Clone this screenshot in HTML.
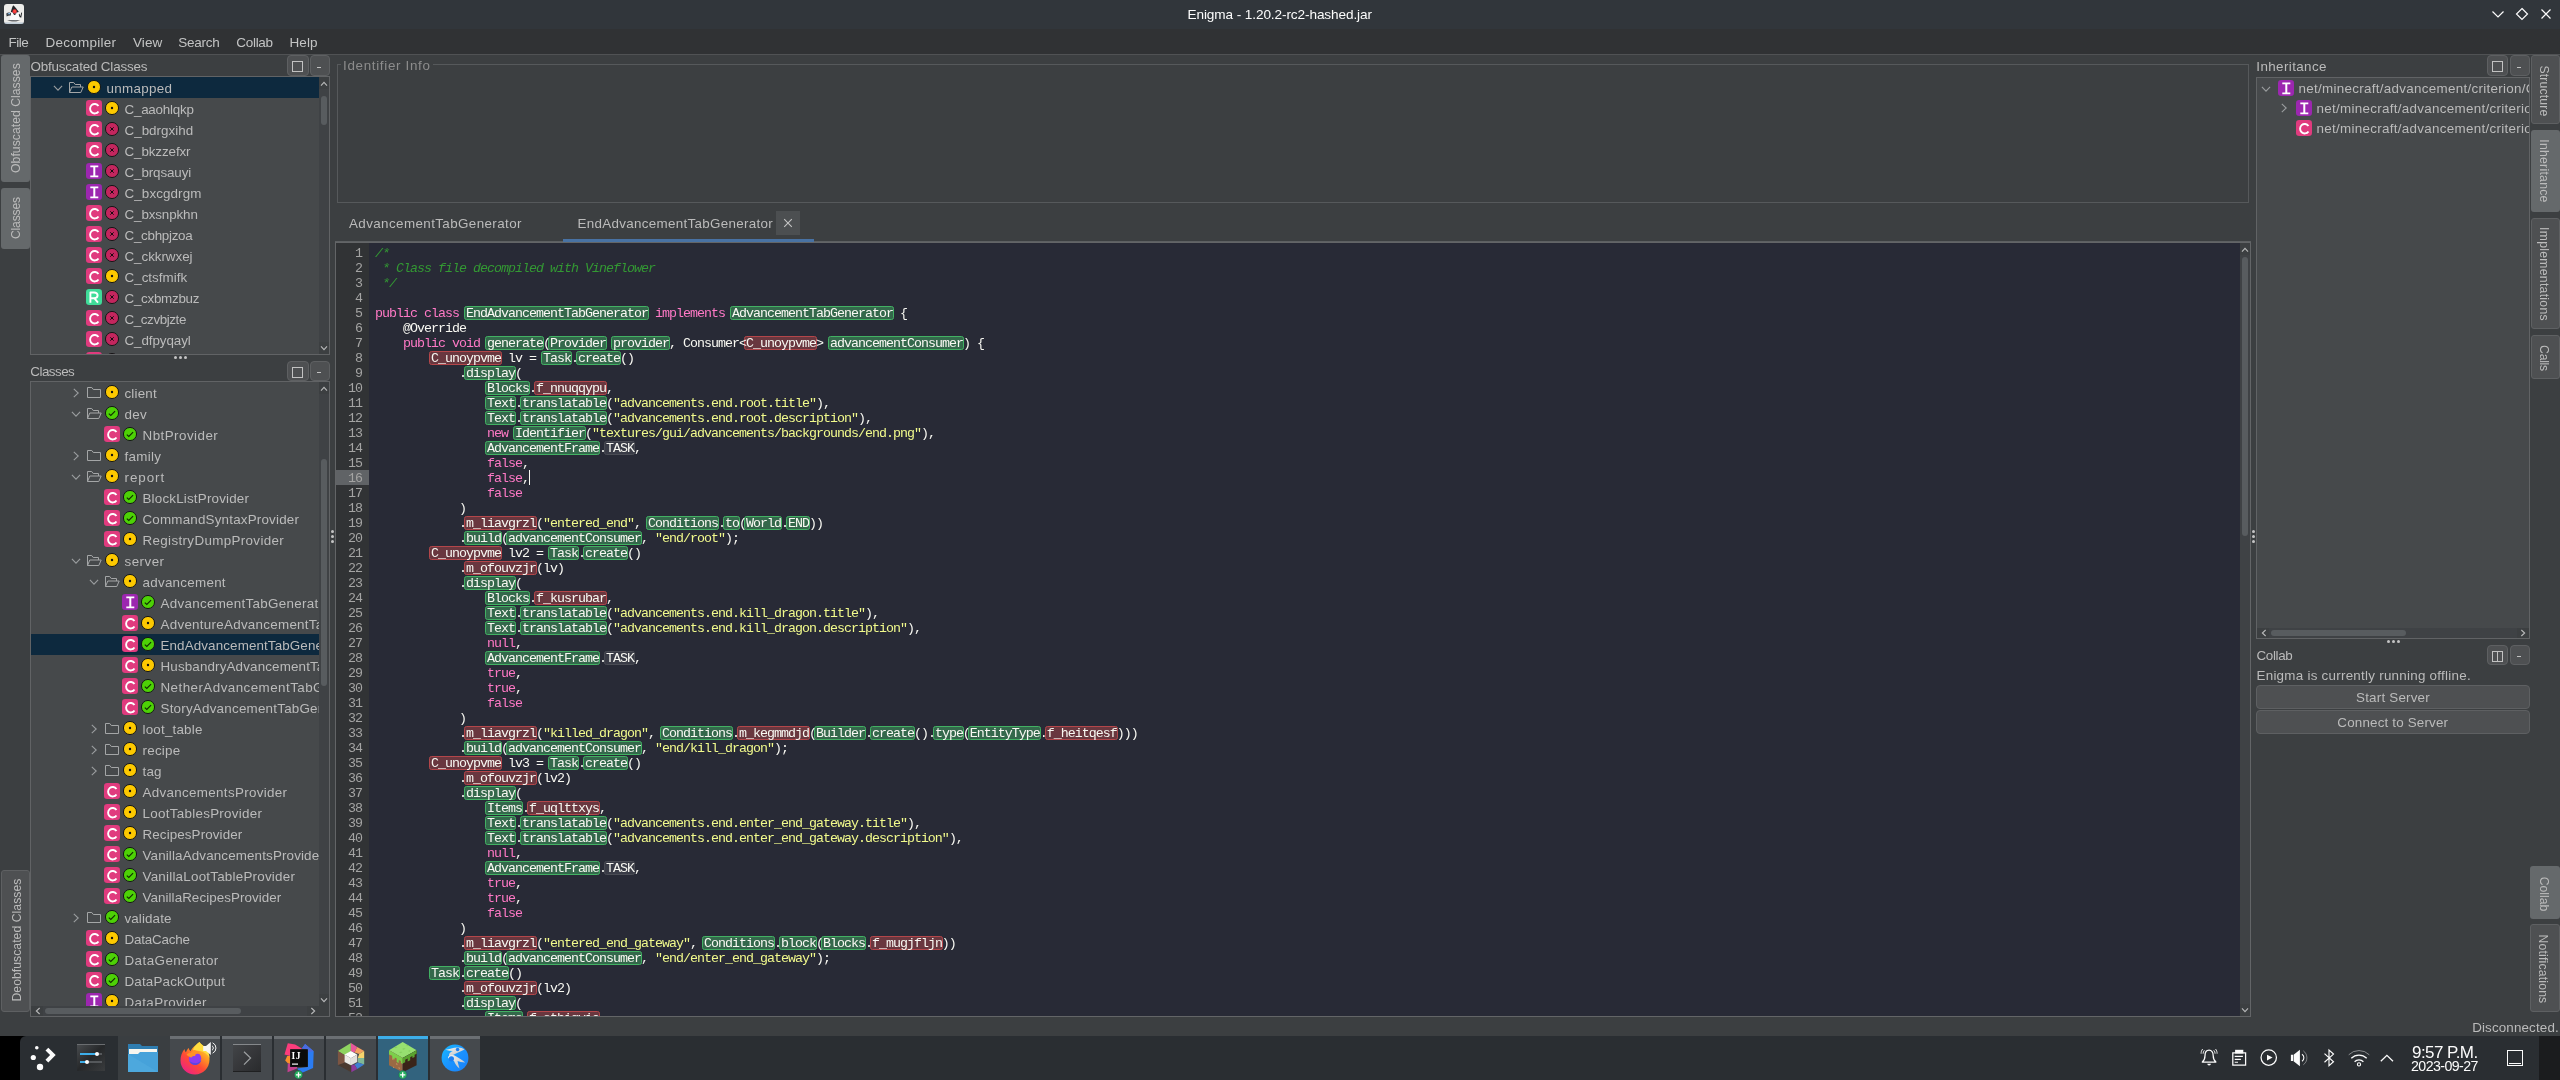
<!DOCTYPE html>
<html><head><meta charset="utf-8"><title>Enigma</title>
<style>
html,body{margin:0;padding:0;background:#3c3f41;}
body{width:2560px;height:1080px;position:relative;overflow:hidden;font-family:"Liberation Sans",sans-serif;}
.a{position:absolute;}
.t{white-space:nowrap;font-family:"Liberation Sans",sans-serif;}
.m{white-space:pre;font-family:"Liberation Mono",monospace;font-size:13.3px;letter-spacing:-0.9812px;line-height:15px;height:15px;color:#f8f8f2;}
.k{color:#ff79c6;} .s{color:#f1fa8c;} .c{color:#339933;font-style:italic;}
.hg,.hr,.hp{box-sizing:border-box;border-radius:2.5px;}
.hg{background:#34684b;border:1px solid #42b163;}
.hr{background:#69373f;border:1px solid #b4464a;}
.hp{background:#393b46;border:1px solid #4a4c54;}
</style></head><body><div id="root" style="position:absolute;left:0;top:0;width:2560px;height:1080px;will-change:transform;">
<div class="a " style="left:0px;top:0px;width:2560px;height:29px;background:#31363b;"></div>
<div class="a t" style="left:1187.5px;top:4.80px;height:20px;line-height:20px;font-size:13.6px;letter-spacing:-0.099px;color:#fcfcfc;">Enigma - 1.20.2-rc2-hashed.jar</div>
<svg class="a" style="left:4px;top:4px" width="20" height="20" viewBox="0 0 20 20">
<rect x="0" y="0" width="20" height="20" rx="3" fill="#ededeb"/>
<rect x="0.500" y="18.500" width="19" height="1.200" rx=".6" fill="#9db3c8" opacity=".7"/>
<path d="M6.800 7.800h8l.700 8.400H6z" fill="#fbfbfb"/>
<path d="M9.200 1.300c.300 0 3.800 3.700 5.600 6.700-2.300 1-5.800 1-8 0 .600-2 1.600-5.400 2.400-6.700z" fill="#23262a"/>
<path d="M9 8.600c1 .9 2.600 1 3.400.500-.200 1.100-1 1.900-1.700 1.900-.800 0-1.500-1-1.700-2.400z" fill="#15171a"/>
<circle cx="10.600" cy="7.400" r="2.150" fill="#f2323c"/><circle cx="10.900" cy="6.900" r="1" fill="#ff5a3a"/>
<path d="M2.300 9.600c1.300-1.300 3.300-1.500 4.700-.600l-.300 2.600c-1.500-.400-2.800 0-4 1z" fill="#2a2d31"/>
<path d="M3.600 9.500c.900-.700 2-.700 2.700-.300l-.400 1.300c-.800-.300-1.600-.200-2.300.200z" fill="#8ec4f2"/>
<path d="M15.500 9.800l.900 2.400.900-3.700.800.200-.900 5-1.600-.600-.900-2.600z" fill="#1f2226"/>
<path d="M3 16.300c3 1.100 10 1.400 13.500.300-3 .200-10 .200-13.500-.300z" fill="#3a3d41"/>
<ellipse cx="9.500" cy="16.600" rx="5.500" ry=".7" fill="#50545a" opacity=".8"/>
</svg>
<svg class="a" style="left:2488px;top:4px" width="70" height="20" viewBox="0 0 70 20" fill="none" stroke="#fcfcfc" stroke-width="1.200">
<path d="M4.500 7.500L10 13L15.500 7.500"/>
<path d="M34 4.500L39.500 10L34 15.500L28.500 10z"/>
<path d="M53.500 5.500L62.500 14.500M62.500 5.500L53.500 14.500"/>
</svg>
<div class="a " style="left:0px;top:29px;width:2560px;height:25px;background:#303234;"></div>
<div class="a " style="left:0px;top:54px;width:2560px;height:1px;background:#505254;"></div>
<div class="a t" style="left:8.6px;top:32.60px;height:20px;line-height:20px;font-size:13.5px;letter-spacing:-0.488px;color:#c3c4c4;">File</div>
<div class="a t" style="left:45.4px;top:32.60px;height:20px;line-height:20px;font-size:13.5px;letter-spacing:0.253px;color:#c3c4c4;">Decompiler</div>
<div class="a t" style="left:133px;top:32.60px;height:20px;line-height:20px;font-size:13.5px;letter-spacing:0.071px;color:#c3c4c4;">View</div>
<div class="a t" style="left:178.2px;top:32.60px;height:20px;line-height:20px;font-size:13.5px;letter-spacing:-0.246px;color:#c3c4c4;">Search</div>
<div class="a t" style="left:236.3px;top:32.60px;height:20px;line-height:20px;font-size:13.5px;letter-spacing:-0.295px;color:#c3c4c4;">Collab</div>
<div class="a t" style="left:289.5px;top:32.60px;height:20px;line-height:20px;font-size:13.5px;letter-spacing:0.109px;color:#c3c4c4;">Help</div>
<div class="a " style="left:0px;top:55px;width:2560px;height:981px;background:#3c3f41;"></div>
<div class="a" style="left:0.5px;top:54.7px;width:29px;height:127.6px;background:#65696b;border-radius:3px;"></div>
<div class="a t" style="left:16.1px;top:118.1px;width:0;height:0;"><div class="t" style="position:absolute;left:-54.90px;top:-10px;width:113.80px;height:20px;line-height:20px;font-size:12.2px;letter-spacing:0.035px;color:#bbbbbb;transform:rotate(-90deg);transform-origin:54.90px 10px;">Obfuscated Classes</div></div>
<div class="a" style="left:0.5px;top:188px;width:29px;height:60.8px;background:#65696b;border-radius:3px;"></div>
<div class="a t" style="left:16.1px;top:217.75px;width:0;height:0;"><div class="t" style="position:absolute;left:-21.05px;top:-10px;width:46.10px;height:20px;line-height:20px;font-size:12.2px;letter-spacing:-0.184px;color:#bbbbbb;transform:rotate(-90deg);transform-origin:21.05px 10px;">Classes</div></div>
<div class="a" style="left:0.5px;top:870px;width:29px;height:141.5px;box-sizing:border-box;background:#4e5052;border:1px solid #5e6062;border-radius:3px;"></div>
<div class="a t" style="left:16.1px;top:940.05px;width:0;height:0;"><div class="t" style="position:absolute;left:-61.55px;top:-10px;width:127.10px;height:20px;line-height:20px;font-size:12.2px;letter-spacing:0.052px;color:#bbbbbb;transform:rotate(-90deg);transform-origin:61.55px 10px;">Deobfuscated Classes</div></div>
<div class="a" style="left:2530.7px;top:55px;width:29.3px;height:69px;box-sizing:border-box;background:#4e5052;border:1px solid #5e6062;border-radius:3px;"></div>
<div class="a t" style="left:2543.7px;top:90.5px;width:0;height:0;"><div class="t" style="position:absolute;left:-25.50px;top:-10px;width:55.00px;height:20px;line-height:20px;font-size:12.2px;letter-spacing:0.167px;color:#bbbbbb;transform:rotate(90deg);transform-origin:25.50px 10px;">Structure</div></div>
<div class="a" style="left:2530.7px;top:130px;width:29.3px;height:82px;background:#65696b;border-radius:3px;"></div>
<div class="a t" style="left:2543.7px;top:171.3px;width:0;height:0;"><div class="t" style="position:absolute;left:-31.70px;top:-10px;width:67.40px;height:20px;line-height:20px;font-size:12.2px;letter-spacing:0.276px;color:#bbbbbb;transform:rotate(90deg);transform-origin:31.70px 10px;">Inheritance</div></div>
<div class="a" style="left:2530.7px;top:218px;width:29.3px;height:111px;box-sizing:border-box;background:#4e5052;border:1px solid #5e6062;border-radius:3px;"></div>
<div class="a t" style="left:2543.7px;top:274.0px;width:0;height:0;"><div class="t" style="position:absolute;left:-47.00px;top:-10px;width:98.00px;height:20px;line-height:20px;font-size:12.2px;letter-spacing:0.299px;color:#bbbbbb;transform:rotate(90deg);transform-origin:47.00px 10px;">Implementations</div></div>
<div class="a" style="left:2530.7px;top:335px;width:29.3px;height:44px;box-sizing:border-box;background:#4e5052;border:1px solid #5e6062;border-radius:3px;"></div>
<div class="a t" style="left:2543.7px;top:357.9px;width:0;height:0;"><div class="t" style="position:absolute;left:-12.90px;top:-10px;width:29.80px;height:20px;line-height:20px;font-size:12.2px;letter-spacing:-0.263px;color:#bbbbbb;transform:rotate(90deg);transform-origin:12.90px 10px;">Calls</div></div>
<div class="a" style="left:2530px;top:866px;width:30px;height:53px;background:#65696b;border-radius:3px;"></div>
<div class="a t" style="left:2543.7px;top:893.85px;width:0;height:0;"><div class="t" style="position:absolute;left:-17.15px;top:-10px;width:38.30px;height:20px;line-height:20px;font-size:12.2px;letter-spacing:-0.048px;color:#bbbbbb;transform:rotate(90deg);transform-origin:17.15px 10px;">Collab</div></div>
<div class="a" style="left:2530px;top:924px;width:30px;height:88px;box-sizing:border-box;background:#4e5052;border:1px solid #5e6062;border-radius:3px;"></div>
<div class="a t" style="left:2543.7px;top:968.8499999999999px;width:0;height:0;"><div class="t" style="position:absolute;left:-34.45px;top:-10px;width:72.90px;height:20px;line-height:20px;font-size:12.2px;letter-spacing:0.188px;color:#bbbbbb;transform:rotate(90deg);transform-origin:34.45px 10px;">Notifications</div></div>
<div class="a t" style="left:30.4px;top:56.80px;height:20px;line-height:20px;font-size:13.4px;letter-spacing:-0.162px;color:#bbbbbb;">Obfuscated Classes</div>
<div class="a" style="left:287px;top:55.25px;width:21.5px;height:20.25px;box-sizing:border-box;background:#4e5052;border:1px solid #5e6062;border-radius:4px;"></div>
<div class="a" style="left:292.25px;top:61.375px;width:11px;height:11px;box-sizing:border-box;border:1px solid #c2c2c2;"></div>
<div class="a" style="left:309.5px;top:55.25px;width:20.5px;height:20.25px;box-sizing:border-box;background:#4e5052;border:1px solid #5e6062;border-radius:4px;"></div>
<div class="a" style="left:317.25px;top:66.875px;width:4px;height:1px;background:#c2c2c2;"></div>
<div class="a" style="left:30px;top:76px;width:300px;height:279px;box-sizing:border-box;background:#46494b;border:1px solid #616365;"></div>
<div class="a clip" style="left:31px;top:77px;width:288px;height:277px;overflow:hidden;"><div class="a" style="left:-31px;top:-77px;">
<div class="a " style="left:31px;top:77px;width:288px;height:21px;background:#0d293e;"></div>
<svg class="a" style="left:49.5px;top:80.0px" width="16" height="16" viewBox="-8 -8 16 16"><path d="M-4.10 -2.20L0 2.20L4.10 -2.20" fill="none" stroke="#9a9d9f" stroke-width="1.1"/></svg>
<svg class="a" style="left:68px;top:79px" width="16" height="16" viewBox="0 0 16 16"><path d="M1.500 13.500V3.500h4.200l1.500 2h5.300v2.500" fill="none" stroke="#a4a6a7" stroke-width="1"/><path d="M1.500 13.500l2.300-5.500h11.400l-2.400 5.500z" fill="none" stroke="#a4a6a7" stroke-width="1" stroke-linejoin="round"/></svg>
<svg class="a" style="left:86px;top:79px" width="16" height="16" viewBox="0 0 16 16"><circle cx="8" cy="8" r="6.550" fill="#fdc900" stroke="#141617" stroke-width="1"/><circle cx="8" cy="8" r="1.2" fill="#111"/></svg>
<div class="a t" style="left:106.5px;top:77.60px;height:21px;line-height:21px;font-size:13.4px;letter-spacing:0.321px;color:#bbbbbb;">unmapped</div>
<svg class="a" style="left:86px;top:100px" width="16" height="16" viewBox="0 0 16 16"><rect x="0" y="0" width="16" height="16" rx="3.200" fill="#e03b7e"/><path d="M12.47 5.98A4.6 4.75 0 1 0 12.47 11.42" fill="none" stroke="#fff" stroke-width="1.900"/></svg>
<svg class="a" style="left:104px;top:100px" width="16" height="16" viewBox="0 0 16 16"><circle cx="8" cy="8" r="6.550" fill="#fdc900" stroke="#141617" stroke-width="1"/><circle cx="8" cy="8" r="1.2" fill="#111"/></svg>
<div class="a t" style="left:124.5px;top:98.60px;height:21px;line-height:21px;font-size:13.4px;letter-spacing:-0.232px;color:#bbbbbb;">C_aaohlqkp</div>
<svg class="a" style="left:86px;top:121px" width="16" height="16" viewBox="0 0 16 16"><rect x="0" y="0" width="16" height="16" rx="3.200" fill="#e03b7e"/><path d="M12.47 5.98A4.6 4.75 0 1 0 12.47 11.42" fill="none" stroke="#fff" stroke-width="1.900"/></svg>
<svg class="a" style="left:104px;top:121px" width="16" height="16" viewBox="0 0 16 16"><circle cx="8" cy="8" r="6.550" fill="#c3265e" stroke="#141617" stroke-width="1"/><path d="M6.300 6.300l3.400 3.400M9.700 6.300l-3.400 3.400" stroke="#1a0a10" stroke-width="1" fill="none"/></svg>
<div class="a t" style="left:124.5px;top:119.60px;height:21px;line-height:21px;font-size:13.4px;letter-spacing:0.017px;color:#bbbbbb;">C_bdrgxihd</div>
<svg class="a" style="left:86px;top:142px" width="16" height="16" viewBox="0 0 16 16"><rect x="0" y="0" width="16" height="16" rx="3.200" fill="#e03b7e"/><path d="M12.47 5.98A4.6 4.75 0 1 0 12.47 11.42" fill="none" stroke="#fff" stroke-width="1.900"/></svg>
<svg class="a" style="left:104px;top:142px" width="16" height="16" viewBox="0 0 16 16"><circle cx="8" cy="8" r="6.550" fill="#c3265e" stroke="#141617" stroke-width="1"/><path d="M6.300 6.300l3.400 3.400M9.700 6.300l-3.400 3.400" stroke="#1a0a10" stroke-width="1" fill="none"/></svg>
<div class="a t" style="left:124.5px;top:140.60px;height:21px;line-height:21px;font-size:13.4px;letter-spacing:-0.102px;color:#bbbbbb;">C_bkzzefxr</div>
<svg class="a" style="left:86px;top:163px" width="16" height="16" viewBox="0 0 16 16"><rect x="0" y="0" width="16" height="16" rx="3.200" fill="#9c27b0"/><path d="M4.300 2.600h8v1.600H9.300v8.400h3v1.600h-8v-1.600h3V4.200h-3z" fill="#fff"/></svg>
<svg class="a" style="left:104px;top:163px" width="16" height="16" viewBox="0 0 16 16"><circle cx="8" cy="8" r="6.550" fill="#c3265e" stroke="#141617" stroke-width="1"/><path d="M6.300 6.300l3.400 3.400M9.700 6.300l-3.400 3.400" stroke="#1a0a10" stroke-width="1" fill="none"/></svg>
<div class="a t" style="left:124.5px;top:161.60px;height:21px;line-height:21px;font-size:13.4px;letter-spacing:-0.108px;color:#bbbbbb;">C_brqsauyi</div>
<svg class="a" style="left:86px;top:184px" width="16" height="16" viewBox="0 0 16 16"><rect x="0" y="0" width="16" height="16" rx="3.200" fill="#9c27b0"/><path d="M4.300 2.600h8v1.600H9.300v8.400h3v1.600h-8v-1.600h3V4.200h-3z" fill="#fff"/></svg>
<svg class="a" style="left:104px;top:184px" width="16" height="16" viewBox="0 0 16 16"><circle cx="8" cy="8" r="6.550" fill="#c3265e" stroke="#141617" stroke-width="1"/><path d="M6.300 6.300l3.400 3.400M9.700 6.300l-3.400 3.400" stroke="#1a0a10" stroke-width="1" fill="none"/></svg>
<div class="a t" style="left:124.5px;top:182.60px;height:21px;line-height:21px;font-size:13.4px;letter-spacing:0.104px;color:#bbbbbb;">C_bxcgdrgm</div>
<svg class="a" style="left:86px;top:205px" width="16" height="16" viewBox="0 0 16 16"><rect x="0" y="0" width="16" height="16" rx="3.200" fill="#e03b7e"/><path d="M12.47 5.98A4.6 4.75 0 1 0 12.47 11.42" fill="none" stroke="#fff" stroke-width="1.900"/></svg>
<svg class="a" style="left:104px;top:205px" width="16" height="16" viewBox="0 0 16 16"><circle cx="8" cy="8" r="6.550" fill="#c3265e" stroke="#141617" stroke-width="1"/><path d="M6.300 6.300l3.400 3.400M9.700 6.300l-3.400 3.400" stroke="#1a0a10" stroke-width="1" fill="none"/></svg>
<div class="a t" style="left:124.5px;top:203.60px;height:21px;line-height:21px;font-size:13.4px;letter-spacing:-0.119px;color:#bbbbbb;">C_bxsnpkhn</div>
<svg class="a" style="left:86px;top:226px" width="16" height="16" viewBox="0 0 16 16"><rect x="0" y="0" width="16" height="16" rx="3.200" fill="#e03b7e"/><path d="M12.47 5.98A4.6 4.75 0 1 0 12.47 11.42" fill="none" stroke="#fff" stroke-width="1.900"/></svg>
<svg class="a" style="left:104px;top:226px" width="16" height="16" viewBox="0 0 16 16"><circle cx="8" cy="8" r="6.550" fill="#c3265e" stroke="#141617" stroke-width="1"/><path d="M6.300 6.300l3.400 3.400M9.700 6.300l-3.400 3.400" stroke="#1a0a10" stroke-width="1" fill="none"/></svg>
<div class="a t" style="left:124.5px;top:224.60px;height:21px;line-height:21px;font-size:13.4px;letter-spacing:-0.277px;color:#bbbbbb;">C_cbhpjzoa</div>
<svg class="a" style="left:86px;top:247px" width="16" height="16" viewBox="0 0 16 16"><rect x="0" y="0" width="16" height="16" rx="3.200" fill="#e03b7e"/><path d="M12.47 5.98A4.6 4.75 0 1 0 12.47 11.42" fill="none" stroke="#fff" stroke-width="1.900"/></svg>
<svg class="a" style="left:104px;top:247px" width="16" height="16" viewBox="0 0 16 16"><circle cx="8" cy="8" r="6.550" fill="#c3265e" stroke="#141617" stroke-width="1"/><path d="M6.300 6.300l3.400 3.400M9.700 6.300l-3.400 3.400" stroke="#1a0a10" stroke-width="1" fill="none"/></svg>
<div class="a t" style="left:124.5px;top:245.60px;height:21px;line-height:21px;font-size:13.4px;letter-spacing:-0.050px;color:#bbbbbb;">C_ckkrwxej</div>
<svg class="a" style="left:86px;top:268px" width="16" height="16" viewBox="0 0 16 16"><rect x="0" y="0" width="16" height="16" rx="3.200" fill="#e03b7e"/><path d="M12.47 5.98A4.6 4.75 0 1 0 12.47 11.42" fill="none" stroke="#fff" stroke-width="1.900"/></svg>
<svg class="a" style="left:104px;top:268px" width="16" height="16" viewBox="0 0 16 16"><circle cx="8" cy="8" r="6.550" fill="#fdc900" stroke="#141617" stroke-width="1"/><circle cx="8" cy="8" r="1.2" fill="#111"/></svg>
<div class="a t" style="left:124.5px;top:266.60px;height:21px;line-height:21px;font-size:13.4px;letter-spacing:0.016px;color:#bbbbbb;">C_ctsfmifk</div>
<svg class="a" style="left:86px;top:289px" width="16" height="16" viewBox="0 0 16 16"><rect x="0" y="0" width="16" height="16" rx="3.200" fill="#3fdc99"/><path d="M4.400 13.700V3.500h3.700c2.200 0 3.500 1 3.500 2.800s-1.300 2.900-3.500 2.900H4.400M8.300 9.200l3.700 4.500" fill="none" stroke="#fff" stroke-width="1.900" stroke-linejoin="round"/></svg>
<svg class="a" style="left:104px;top:289px" width="16" height="16" viewBox="0 0 16 16"><circle cx="8" cy="8" r="6.550" fill="#c3265e" stroke="#141617" stroke-width="1"/><path d="M6.300 6.300l3.400 3.400M9.700 6.300l-3.400 3.400" stroke="#1a0a10" stroke-width="1" fill="none"/></svg>
<div class="a t" style="left:124.5px;top:287.60px;height:21px;line-height:21px;font-size:13.4px;letter-spacing:-0.275px;color:#bbbbbb;">C_cxbmzbuz</div>
<svg class="a" style="left:86px;top:310px" width="16" height="16" viewBox="0 0 16 16"><rect x="0" y="0" width="16" height="16" rx="3.200" fill="#e03b7e"/><path d="M12.47 5.98A4.6 4.75 0 1 0 12.47 11.42" fill="none" stroke="#fff" stroke-width="1.900"/></svg>
<svg class="a" style="left:104px;top:310px" width="16" height="16" viewBox="0 0 16 16"><circle cx="8" cy="8" r="6.550" fill="#c3265e" stroke="#141617" stroke-width="1"/><path d="M6.300 6.300l3.400 3.400M9.700 6.300l-3.400 3.400" stroke="#1a0a10" stroke-width="1" fill="none"/></svg>
<div class="a t" style="left:124.5px;top:308.60px;height:21px;line-height:21px;font-size:13.4px;letter-spacing:-0.403px;color:#bbbbbb;">C_czvbjzte</div>
<svg class="a" style="left:86px;top:331px" width="16" height="16" viewBox="0 0 16 16"><rect x="0" y="0" width="16" height="16" rx="3.200" fill="#e03b7e"/><path d="M12.47 5.98A4.6 4.75 0 1 0 12.47 11.42" fill="none" stroke="#fff" stroke-width="1.900"/></svg>
<svg class="a" style="left:104px;top:331px" width="16" height="16" viewBox="0 0 16 16"><circle cx="8" cy="8" r="6.550" fill="#c3265e" stroke="#141617" stroke-width="1"/><path d="M6.300 6.300l3.400 3.400M9.700 6.300l-3.400 3.400" stroke="#1a0a10" stroke-width="1" fill="none"/></svg>
<div class="a t" style="left:124.5px;top:329.60px;height:21px;line-height:21px;font-size:13.4px;letter-spacing:-0.074px;color:#bbbbbb;">C_dfpyqayl</div>
<svg class="a" style="left:86px;top:352px" width="16" height="16" viewBox="0 0 16 16"><rect x="0" y="0" width="16" height="16" rx="3.200" fill="#e03b7e"/><path d="M12.47 5.98A4.6 4.75 0 1 0 12.47 11.42" fill="none" stroke="#fff" stroke-width="1.900"/></svg>
<svg class="a" style="left:104px;top:352px" width="16" height="16" viewBox="0 0 16 16"><circle cx="8" cy="8" r="6.550" fill="#c3265e" stroke="#141617" stroke-width="1"/><path d="M6.300 6.300l3.400 3.400M9.700 6.300l-3.400 3.400" stroke="#1a0a10" stroke-width="1" fill="none"/></svg>
<div class="a t" style="left:124.5px;top:350.60px;height:21px;line-height:21px;font-size:13.4px;letter-spacing:-0.449px;color:#bbbbbb;">C_dgvbkzpq</div>
</div></div>
<div class="a " style="left:319px;top:77px;width:10px;height:277px;background:#3f4245;"></div>
<div class="a " style="left:319px;top:77px;width:10px;height:12px;background:#3c3f41;"></div>
<div class="a " style="left:319px;top:342px;width:10px;height:12px;background:#3c3f41;"></div>
<svg class="a" style="left:316px;top:75.5px" width="16" height="16" viewBox="-8 -8 16 16"><path d="M-3.00 1.65L0 -1.65L3.00 1.65" fill="none" stroke="#b8b9ba" stroke-width="1.1"/></svg>
<svg class="a" style="left:316px;top:339.5px" width="16" height="16" viewBox="-8 -8 16 16"><path d="M-3.00 -1.65L0 1.65L3.00 -1.65" fill="none" stroke="#b8b9ba" stroke-width="1.1"/></svg>
<div class="a" style="left:321px;top:96px;width:6px;height:29px;background:#585c5f;border-radius:3px;"></div>
<div class="a" style="left:173.5px;top:356px;width:3px;height:3px;border-radius:50%;background:#c4c4c4;"></div>
<div class="a" style="left:178.5px;top:356px;width:3px;height:3px;border-radius:50%;background:#c4c4c4;"></div>
<div class="a" style="left:183.5px;top:356px;width:3px;height:3px;border-radius:50%;background:#c4c4c4;"></div>
<div class="a t" style="left:30.3px;top:362.40px;height:20px;line-height:20px;font-size:13.4px;letter-spacing:-0.523px;color:#bbbbbb;">Classes</div>
<div class="a" style="left:287px;top:360.5px;width:21.5px;height:20.25px;box-sizing:border-box;background:#4e5052;border:1px solid #5e6062;border-radius:4px;"></div>
<div class="a" style="left:292.25px;top:366.625px;width:11px;height:11px;box-sizing:border-box;border:1px solid #c2c2c2;"></div>
<div class="a" style="left:309.5px;top:360.5px;width:20.5px;height:20.25px;box-sizing:border-box;background:#4e5052;border:1px solid #5e6062;border-radius:4px;"></div>
<div class="a" style="left:317.25px;top:372.125px;width:4px;height:1px;background:#c2c2c2;"></div>
<div class="a" style="left:30px;top:381px;width:300px;height:636px;box-sizing:border-box;background:#46494b;border:1px solid #616365;"></div>
<div class="a clip" style="left:31px;top:382px;width:288px;height:624px;overflow:hidden;"><div class="a" style="left:-31px;top:-382px;">
<svg class="a" style="left:67.5px;top:384.5px" width="16" height="16" viewBox="-8 -8 16 16"><path d="M-2.20 -4.10L2.20 0L-2.20 4.10" fill="none" stroke="#9a9d9f" stroke-width="1.1"/></svg>
<svg class="a" style="left:86px;top:384px" width="16" height="16" viewBox="0 0 16 16"><path d="M1.500 13.500V3.500h4.300l1.500 2h7.200v8z" fill="none" stroke="#a4a6a7" stroke-width="1" stroke-linejoin="round"/></svg>
<svg class="a" style="left:104px;top:384px" width="16" height="16" viewBox="0 0 16 16"><circle cx="8" cy="8" r="6.550" fill="#fdc900" stroke="#141617" stroke-width="1"/><circle cx="8" cy="8" r="1.2" fill="#111"/></svg>
<div class="a t" style="left:124.5px;top:382.60px;height:21px;line-height:21px;font-size:13.4px;letter-spacing:0.170px;color:#bbbbbb;">client</div>
<svg class="a" style="left:67.5px;top:406.0px" width="16" height="16" viewBox="-8 -8 16 16"><path d="M-4.10 -2.20L0 2.20L4.10 -2.20" fill="none" stroke="#9a9d9f" stroke-width="1.1"/></svg>
<svg class="a" style="left:86px;top:405px" width="16" height="16" viewBox="0 0 16 16"><path d="M1.500 13.500V3.500h4.200l1.500 2h5.300v2.500" fill="none" stroke="#a4a6a7" stroke-width="1"/><path d="M1.500 13.500l2.300-5.500h11.400l-2.400 5.500z" fill="none" stroke="#a4a6a7" stroke-width="1" stroke-linejoin="round"/></svg>
<svg class="a" style="left:104px;top:405px" width="16" height="16" viewBox="0 0 16 16"><circle cx="8" cy="8" r="6.550" fill="#4dd106" stroke="#141617" stroke-width="1"/><path d="M4.800 8.600l2 1.900 4.300-4.400" stroke="#102a00" stroke-width="1.100" fill="none"/></svg>
<div class="a t" style="left:124.5px;top:403.60px;height:21px;line-height:21px;font-size:13.4px;letter-spacing:0.365px;color:#bbbbbb;">dev</div>
<svg class="a" style="left:104px;top:426px" width="16" height="16" viewBox="0 0 16 16"><rect x="0" y="0" width="16" height="16" rx="3.200" fill="#e03b7e"/><path d="M12.47 5.98A4.6 4.75 0 1 0 12.47 11.42" fill="none" stroke="#fff" stroke-width="1.900"/></svg>
<svg class="a" style="left:122px;top:426px" width="16" height="16" viewBox="0 0 16 16"><circle cx="8" cy="8" r="6.550" fill="#4dd106" stroke="#141617" stroke-width="1"/><path d="M4.800 8.600l2 1.900 4.300-4.400" stroke="#102a00" stroke-width="1.100" fill="none"/></svg>
<div class="a t" style="left:142.5px;top:424.60px;height:21px;line-height:21px;font-size:13.4px;letter-spacing:0.459px;color:#bbbbbb;">NbtProvider</div>
<svg class="a" style="left:67.5px;top:447.5px" width="16" height="16" viewBox="-8 -8 16 16"><path d="M-2.20 -4.10L2.20 0L-2.20 4.10" fill="none" stroke="#9a9d9f" stroke-width="1.1"/></svg>
<svg class="a" style="left:86px;top:447px" width="16" height="16" viewBox="0 0 16 16"><path d="M1.500 13.500V3.500h4.300l1.500 2h7.200v8z" fill="none" stroke="#a4a6a7" stroke-width="1" stroke-linejoin="round"/></svg>
<svg class="a" style="left:104px;top:447px" width="16" height="16" viewBox="0 0 16 16"><circle cx="8" cy="8" r="6.550" fill="#fdc900" stroke="#141617" stroke-width="1"/><circle cx="8" cy="8" r="1.2" fill="#111"/></svg>
<div class="a t" style="left:124.5px;top:445.60px;height:21px;line-height:21px;font-size:13.4px;letter-spacing:0.285px;color:#bbbbbb;">family</div>
<svg class="a" style="left:67.5px;top:469.0px" width="16" height="16" viewBox="-8 -8 16 16"><path d="M-4.10 -2.20L0 2.20L4.10 -2.20" fill="none" stroke="#9a9d9f" stroke-width="1.1"/></svg>
<svg class="a" style="left:86px;top:468px" width="16" height="16" viewBox="0 0 16 16"><path d="M1.500 13.500V3.500h4.200l1.500 2h5.300v2.500" fill="none" stroke="#a4a6a7" stroke-width="1"/><path d="M1.500 13.500l2.300-5.500h11.400l-2.400 5.500z" fill="none" stroke="#a4a6a7" stroke-width="1" stroke-linejoin="round"/></svg>
<svg class="a" style="left:104px;top:468px" width="16" height="16" viewBox="0 0 16 16"><circle cx="8" cy="8" r="6.550" fill="#fdc900" stroke="#141617" stroke-width="1"/><circle cx="8" cy="8" r="1.2" fill="#111"/></svg>
<div class="a t" style="left:124.5px;top:466.60px;height:21px;line-height:21px;font-size:13.4px;letter-spacing:0.949px;color:#bbbbbb;">report</div>
<svg class="a" style="left:104px;top:489px" width="16" height="16" viewBox="0 0 16 16"><rect x="0" y="0" width="16" height="16" rx="3.200" fill="#e03b7e"/><path d="M12.47 5.98A4.6 4.75 0 1 0 12.47 11.42" fill="none" stroke="#fff" stroke-width="1.900"/></svg>
<svg class="a" style="left:122px;top:489px" width="16" height="16" viewBox="0 0 16 16"><circle cx="8" cy="8" r="6.550" fill="#4dd106" stroke="#141617" stroke-width="1"/><path d="M4.800 8.600l2 1.900 4.300-4.400" stroke="#102a00" stroke-width="1.100" fill="none"/></svg>
<div class="a t" style="left:142.5px;top:487.60px;height:21px;line-height:21px;font-size:13.4px;letter-spacing:0.187px;color:#bbbbbb;">BlockListProvider</div>
<svg class="a" style="left:104px;top:510px" width="16" height="16" viewBox="0 0 16 16"><rect x="0" y="0" width="16" height="16" rx="3.200" fill="#e03b7e"/><path d="M12.47 5.98A4.6 4.75 0 1 0 12.47 11.42" fill="none" stroke="#fff" stroke-width="1.900"/></svg>
<svg class="a" style="left:122px;top:510px" width="16" height="16" viewBox="0 0 16 16"><circle cx="8" cy="8" r="6.550" fill="#4dd106" stroke="#141617" stroke-width="1"/><path d="M4.800 8.600l2 1.900 4.300-4.400" stroke="#102a00" stroke-width="1.100" fill="none"/></svg>
<div class="a t" style="left:142.5px;top:508.60px;height:21px;line-height:21px;font-size:13.4px;letter-spacing:0.192px;color:#bbbbbb;">CommandSyntaxProvider</div>
<svg class="a" style="left:104px;top:531px" width="16" height="16" viewBox="0 0 16 16"><rect x="0" y="0" width="16" height="16" rx="3.200" fill="#e03b7e"/><path d="M12.47 5.98A4.6 4.75 0 1 0 12.47 11.42" fill="none" stroke="#fff" stroke-width="1.900"/></svg>
<svg class="a" style="left:122px;top:531px" width="16" height="16" viewBox="0 0 16 16"><circle cx="8" cy="8" r="6.550" fill="#fdc900" stroke="#141617" stroke-width="1"/><circle cx="8" cy="8" r="1.2" fill="#111"/></svg>
<div class="a t" style="left:142.5px;top:529.60px;height:21px;line-height:21px;font-size:13.4px;letter-spacing:0.346px;color:#bbbbbb;">RegistryDumpProvider</div>
<svg class="a" style="left:67.5px;top:553.0px" width="16" height="16" viewBox="-8 -8 16 16"><path d="M-4.10 -2.20L0 2.20L4.10 -2.20" fill="none" stroke="#9a9d9f" stroke-width="1.1"/></svg>
<svg class="a" style="left:86px;top:552px" width="16" height="16" viewBox="0 0 16 16"><path d="M1.500 13.500V3.500h4.200l1.500 2h5.300v2.500" fill="none" stroke="#a4a6a7" stroke-width="1"/><path d="M1.500 13.500l2.300-5.500h11.400l-2.400 5.500z" fill="none" stroke="#a4a6a7" stroke-width="1" stroke-linejoin="round"/></svg>
<svg class="a" style="left:104px;top:552px" width="16" height="16" viewBox="0 0 16 16"><circle cx="8" cy="8" r="6.550" fill="#fdc900" stroke="#141617" stroke-width="1"/><circle cx="8" cy="8" r="1.2" fill="#111"/></svg>
<div class="a t" style="left:124.5px;top:550.60px;height:21px;line-height:21px;font-size:13.4px;letter-spacing:0.462px;color:#bbbbbb;">server</div>
<svg class="a" style="left:85.5px;top:574.0px" width="16" height="16" viewBox="-8 -8 16 16"><path d="M-4.10 -2.20L0 2.20L4.10 -2.20" fill="none" stroke="#9a9d9f" stroke-width="1.1"/></svg>
<svg class="a" style="left:104px;top:573px" width="16" height="16" viewBox="0 0 16 16"><path d="M1.500 13.500V3.500h4.200l1.500 2h5.300v2.500" fill="none" stroke="#a4a6a7" stroke-width="1"/><path d="M1.500 13.500l2.300-5.500h11.400l-2.400 5.500z" fill="none" stroke="#a4a6a7" stroke-width="1" stroke-linejoin="round"/></svg>
<svg class="a" style="left:122px;top:573px" width="16" height="16" viewBox="0 0 16 16"><circle cx="8" cy="8" r="6.550" fill="#fdc900" stroke="#141617" stroke-width="1"/><circle cx="8" cy="8" r="1.2" fill="#111"/></svg>
<div class="a t" style="left:142.5px;top:571.60px;height:21px;line-height:21px;font-size:13.4px;letter-spacing:0.268px;color:#bbbbbb;">advancement</div>
<svg class="a" style="left:122px;top:594px" width="16" height="16" viewBox="0 0 16 16"><rect x="0" y="0" width="16" height="16" rx="3.200" fill="#9c27b0"/><path d="M4.300 2.600h8v1.600H9.300v8.400h3v1.600h-8v-1.600h3V4.200h-3z" fill="#fff"/></svg>
<svg class="a" style="left:140px;top:594px" width="16" height="16" viewBox="0 0 16 16"><circle cx="8" cy="8" r="6.550" fill="#4dd106" stroke="#141617" stroke-width="1"/><path d="M4.800 8.600l2 1.900 4.300-4.400" stroke="#102a00" stroke-width="1.100" fill="none"/></svg>
<div class="a t" style="left:160.5px;top:592.60px;height:21px;line-height:21px;font-size:13.4px;letter-spacing:0.292px;color:#bbbbbb;">AdvancementTabGenerator</div>
<svg class="a" style="left:122px;top:615px" width="16" height="16" viewBox="0 0 16 16"><rect x="0" y="0" width="16" height="16" rx="3.200" fill="#e03b7e"/><path d="M12.47 5.98A4.6 4.75 0 1 0 12.47 11.42" fill="none" stroke="#fff" stroke-width="1.900"/></svg>
<svg class="a" style="left:140px;top:615px" width="16" height="16" viewBox="0 0 16 16"><circle cx="8" cy="8" r="6.550" fill="#fdc900" stroke="#141617" stroke-width="1"/><circle cx="8" cy="8" r="1.2" fill="#111"/></svg>
<div class="a t" style="left:160.5px;top:613.60px;height:21px;line-height:21px;font-size:13.4px;letter-spacing:0.269px;color:#bbbbbb;">AdventureAdvancementTabGenerator</div>
<div class="a " style="left:31px;top:634px;width:288px;height:21px;background:#0d293e;"></div>
<svg class="a" style="left:122px;top:636px" width="16" height="16" viewBox="0 0 16 16"><rect x="0" y="0" width="16" height="16" rx="3.200" fill="#e03b7e"/><path d="M12.47 5.98A4.6 4.75 0 1 0 12.47 11.42" fill="none" stroke="#fff" stroke-width="1.900"/></svg>
<svg class="a" style="left:140px;top:636px" width="16" height="16" viewBox="0 0 16 16"><circle cx="8" cy="8" r="6.550" fill="#4dd106" stroke="#141617" stroke-width="1"/><path d="M4.800 8.600l2 1.900 4.300-4.400" stroke="#102a00" stroke-width="1.100" fill="none"/></svg>
<div class="a t" style="left:160.5px;top:634.60px;height:21px;line-height:21px;font-size:13.4px;letter-spacing:0.119px;color:#bbbbbb;">EndAdvancementTabGenerator</div>
<svg class="a" style="left:122px;top:657px" width="16" height="16" viewBox="0 0 16 16"><rect x="0" y="0" width="16" height="16" rx="3.200" fill="#e03b7e"/><path d="M12.47 5.98A4.6 4.75 0 1 0 12.47 11.42" fill="none" stroke="#fff" stroke-width="1.900"/></svg>
<svg class="a" style="left:140px;top:657px" width="16" height="16" viewBox="0 0 16 16"><circle cx="8" cy="8" r="6.550" fill="#fdc900" stroke="#141617" stroke-width="1"/><circle cx="8" cy="8" r="1.2" fill="#111"/></svg>
<div class="a t" style="left:160.5px;top:655.60px;height:21px;line-height:21px;font-size:13.4px;letter-spacing:0.143px;color:#bbbbbb;">HusbandryAdvancementTabGenerator</div>
<svg class="a" style="left:122px;top:678px" width="16" height="16" viewBox="0 0 16 16"><rect x="0" y="0" width="16" height="16" rx="3.200" fill="#e03b7e"/><path d="M12.47 5.98A4.6 4.75 0 1 0 12.47 11.42" fill="none" stroke="#fff" stroke-width="1.900"/></svg>
<svg class="a" style="left:140px;top:678px" width="16" height="16" viewBox="0 0 16 16"><circle cx="8" cy="8" r="6.550" fill="#4dd106" stroke="#141617" stroke-width="1"/><path d="M4.800 8.600l2 1.900 4.300-4.400" stroke="#102a00" stroke-width="1.100" fill="none"/></svg>
<div class="a t" style="left:160.5px;top:676.60px;height:21px;line-height:21px;font-size:13.4px;letter-spacing:0.447px;color:#bbbbbb;">NetherAdvancementTabGenerator</div>
<svg class="a" style="left:122px;top:699px" width="16" height="16" viewBox="0 0 16 16"><rect x="0" y="0" width="16" height="16" rx="3.200" fill="#e03b7e"/><path d="M12.47 5.98A4.6 4.75 0 1 0 12.47 11.42" fill="none" stroke="#fff" stroke-width="1.900"/></svg>
<svg class="a" style="left:140px;top:699px" width="16" height="16" viewBox="0 0 16 16"><circle cx="8" cy="8" r="6.550" fill="#4dd106" stroke="#141617" stroke-width="1"/><path d="M4.800 8.600l2 1.900 4.300-4.400" stroke="#102a00" stroke-width="1.100" fill="none"/></svg>
<div class="a t" style="left:160.5px;top:697.60px;height:21px;line-height:21px;font-size:13.4px;letter-spacing:0.224px;color:#bbbbbb;">StoryAdvancementTabGenerator</div>
<svg class="a" style="left:85.5px;top:720.5px" width="16" height="16" viewBox="-8 -8 16 16"><path d="M-2.20 -4.10L2.20 0L-2.20 4.10" fill="none" stroke="#9a9d9f" stroke-width="1.1"/></svg>
<svg class="a" style="left:104px;top:720px" width="16" height="16" viewBox="0 0 16 16"><path d="M1.500 13.500V3.500h4.300l1.500 2h7.200v8z" fill="none" stroke="#a4a6a7" stroke-width="1" stroke-linejoin="round"/></svg>
<svg class="a" style="left:122px;top:720px" width="16" height="16" viewBox="0 0 16 16"><circle cx="8" cy="8" r="6.550" fill="#fdc900" stroke="#141617" stroke-width="1"/><circle cx="8" cy="8" r="1.2" fill="#111"/></svg>
<div class="a t" style="left:142.5px;top:718.60px;height:21px;line-height:21px;font-size:13.4px;letter-spacing:0.199px;color:#bbbbbb;">loot_table</div>
<svg class="a" style="left:85.5px;top:741.5px" width="16" height="16" viewBox="-8 -8 16 16"><path d="M-2.20 -4.10L2.20 0L-2.20 4.10" fill="none" stroke="#9a9d9f" stroke-width="1.1"/></svg>
<svg class="a" style="left:104px;top:741px" width="16" height="16" viewBox="0 0 16 16"><path d="M1.500 13.500V3.500h4.300l1.500 2h7.200v8z" fill="none" stroke="#a4a6a7" stroke-width="1" stroke-linejoin="round"/></svg>
<svg class="a" style="left:122px;top:741px" width="16" height="16" viewBox="0 0 16 16"><circle cx="8" cy="8" r="6.550" fill="#fdc900" stroke="#141617" stroke-width="1"/><circle cx="8" cy="8" r="1.2" fill="#111"/></svg>
<div class="a t" style="left:142.5px;top:739.60px;height:21px;line-height:21px;font-size:13.4px;letter-spacing:0.251px;color:#bbbbbb;">recipe</div>
<svg class="a" style="left:85.5px;top:762.5px" width="16" height="16" viewBox="-8 -8 16 16"><path d="M-2.20 -4.10L2.20 0L-2.20 4.10" fill="none" stroke="#9a9d9f" stroke-width="1.1"/></svg>
<svg class="a" style="left:104px;top:762px" width="16" height="16" viewBox="0 0 16 16"><path d="M1.500 13.500V3.500h4.300l1.500 2h7.200v8z" fill="none" stroke="#a4a6a7" stroke-width="1" stroke-linejoin="round"/></svg>
<svg class="a" style="left:122px;top:762px" width="16" height="16" viewBox="0 0 16 16"><circle cx="8" cy="8" r="6.550" fill="#fdc900" stroke="#141617" stroke-width="1"/><circle cx="8" cy="8" r="1.2" fill="#111"/></svg>
<div class="a t" style="left:142.5px;top:760.60px;height:21px;line-height:21px;font-size:13.4px;letter-spacing:0.224px;color:#bbbbbb;">tag</div>
<svg class="a" style="left:104px;top:783px" width="16" height="16" viewBox="0 0 16 16"><rect x="0" y="0" width="16" height="16" rx="3.200" fill="#e03b7e"/><path d="M12.47 5.98A4.6 4.75 0 1 0 12.47 11.42" fill="none" stroke="#fff" stroke-width="1.900"/></svg>
<svg class="a" style="left:122px;top:783px" width="16" height="16" viewBox="0 0 16 16"><circle cx="8" cy="8" r="6.550" fill="#fdc900" stroke="#141617" stroke-width="1"/><circle cx="8" cy="8" r="1.2" fill="#111"/></svg>
<div class="a t" style="left:142.5px;top:781.60px;height:21px;line-height:21px;font-size:13.4px;letter-spacing:0.318px;color:#bbbbbb;">AdvancementsProvider</div>
<svg class="a" style="left:104px;top:804px" width="16" height="16" viewBox="0 0 16 16"><rect x="0" y="0" width="16" height="16" rx="3.200" fill="#e03b7e"/><path d="M12.47 5.98A4.6 4.75 0 1 0 12.47 11.42" fill="none" stroke="#fff" stroke-width="1.900"/></svg>
<svg class="a" style="left:122px;top:804px" width="16" height="16" viewBox="0 0 16 16"><circle cx="8" cy="8" r="6.550" fill="#fdc900" stroke="#141617" stroke-width="1"/><circle cx="8" cy="8" r="1.2" fill="#111"/></svg>
<div class="a t" style="left:142.5px;top:802.60px;height:21px;line-height:21px;font-size:13.4px;letter-spacing:0.288px;color:#bbbbbb;">LootTablesProvider</div>
<svg class="a" style="left:104px;top:825px" width="16" height="16" viewBox="0 0 16 16"><rect x="0" y="0" width="16" height="16" rx="3.200" fill="#e03b7e"/><path d="M12.47 5.98A4.6 4.75 0 1 0 12.47 11.42" fill="none" stroke="#fff" stroke-width="1.900"/></svg>
<svg class="a" style="left:122px;top:825px" width="16" height="16" viewBox="0 0 16 16"><circle cx="8" cy="8" r="6.550" fill="#fdc900" stroke="#141617" stroke-width="1"/><circle cx="8" cy="8" r="1.2" fill="#111"/></svg>
<div class="a t" style="left:142.5px;top:823.60px;height:21px;line-height:21px;font-size:13.4px;letter-spacing:0.106px;color:#bbbbbb;">RecipesProvider</div>
<svg class="a" style="left:104px;top:846px" width="16" height="16" viewBox="0 0 16 16"><rect x="0" y="0" width="16" height="16" rx="3.200" fill="#e03b7e"/><path d="M12.47 5.98A4.6 4.75 0 1 0 12.47 11.42" fill="none" stroke="#fff" stroke-width="1.900"/></svg>
<svg class="a" style="left:122px;top:846px" width="16" height="16" viewBox="0 0 16 16"><circle cx="8" cy="8" r="6.550" fill="#4dd106" stroke="#141617" stroke-width="1"/><path d="M4.800 8.600l2 1.900 4.300-4.400" stroke="#102a00" stroke-width="1.100" fill="none"/></svg>
<div class="a t" style="left:142.5px;top:844.60px;height:21px;line-height:21px;font-size:13.4px;letter-spacing:0.138px;color:#bbbbbb;">VanillaAdvancementsProvider</div>
<svg class="a" style="left:104px;top:867px" width="16" height="16" viewBox="0 0 16 16"><rect x="0" y="0" width="16" height="16" rx="3.200" fill="#e03b7e"/><path d="M12.47 5.98A4.6 4.75 0 1 0 12.47 11.42" fill="none" stroke="#fff" stroke-width="1.900"/></svg>
<svg class="a" style="left:122px;top:867px" width="16" height="16" viewBox="0 0 16 16"><circle cx="8" cy="8" r="6.550" fill="#4dd106" stroke="#141617" stroke-width="1"/><path d="M4.800 8.600l2 1.900 4.300-4.400" stroke="#102a00" stroke-width="1.100" fill="none"/></svg>
<div class="a t" style="left:142.5px;top:865.60px;height:21px;line-height:21px;font-size:13.4px;letter-spacing:0.227px;color:#bbbbbb;">VanillaLootTableProvider</div>
<svg class="a" style="left:104px;top:888px" width="16" height="16" viewBox="0 0 16 16"><rect x="0" y="0" width="16" height="16" rx="3.200" fill="#e03b7e"/><path d="M12.47 5.98A4.6 4.75 0 1 0 12.47 11.42" fill="none" stroke="#fff" stroke-width="1.900"/></svg>
<svg class="a" style="left:122px;top:888px" width="16" height="16" viewBox="0 0 16 16"><circle cx="8" cy="8" r="6.550" fill="#4dd106" stroke="#141617" stroke-width="1"/><path d="M4.800 8.600l2 1.900 4.300-4.400" stroke="#102a00" stroke-width="1.100" fill="none"/></svg>
<div class="a t" style="left:142.5px;top:886.60px;height:21px;line-height:21px;font-size:13.4px;letter-spacing:0.062px;color:#bbbbbb;">VanillaRecipesProvider</div>
<svg class="a" style="left:67.5px;top:909.5px" width="16" height="16" viewBox="-8 -8 16 16"><path d="M-2.20 -4.10L2.20 0L-2.20 4.10" fill="none" stroke="#9a9d9f" stroke-width="1.1"/></svg>
<svg class="a" style="left:86px;top:909px" width="16" height="16" viewBox="0 0 16 16"><path d="M1.500 13.500V3.500h4.300l1.500 2h7.200v8z" fill="none" stroke="#a4a6a7" stroke-width="1" stroke-linejoin="round"/></svg>
<svg class="a" style="left:104px;top:909px" width="16" height="16" viewBox="0 0 16 16"><circle cx="8" cy="8" r="6.550" fill="#4dd106" stroke="#141617" stroke-width="1"/><path d="M4.800 8.600l2 1.900 4.300-4.400" stroke="#102a00" stroke-width="1.100" fill="none"/></svg>
<div class="a t" style="left:124.5px;top:907.60px;height:21px;line-height:21px;font-size:13.4px;letter-spacing:0.114px;color:#bbbbbb;">validate</div>
<svg class="a" style="left:86px;top:930px" width="16" height="16" viewBox="0 0 16 16"><rect x="0" y="0" width="16" height="16" rx="3.200" fill="#e03b7e"/><path d="M12.47 5.98A4.6 4.75 0 1 0 12.47 11.42" fill="none" stroke="#fff" stroke-width="1.900"/></svg>
<svg class="a" style="left:104px;top:930px" width="16" height="16" viewBox="0 0 16 16"><circle cx="8" cy="8" r="6.550" fill="#fdc900" stroke="#141617" stroke-width="1"/><circle cx="8" cy="8" r="1.2" fill="#111"/></svg>
<div class="a t" style="left:124.5px;top:928.60px;height:21px;line-height:21px;font-size:13.4px;letter-spacing:-0.182px;color:#bbbbbb;">DataCache</div>
<svg class="a" style="left:86px;top:951px" width="16" height="16" viewBox="0 0 16 16"><rect x="0" y="0" width="16" height="16" rx="3.200" fill="#e03b7e"/><path d="M12.47 5.98A4.6 4.75 0 1 0 12.47 11.42" fill="none" stroke="#fff" stroke-width="1.900"/></svg>
<svg class="a" style="left:104px;top:951px" width="16" height="16" viewBox="0 0 16 16"><circle cx="8" cy="8" r="6.550" fill="#4dd106" stroke="#141617" stroke-width="1"/><path d="M4.800 8.600l2 1.900 4.300-4.400" stroke="#102a00" stroke-width="1.100" fill="none"/></svg>
<div class="a t" style="left:124.5px;top:949.60px;height:21px;line-height:21px;font-size:13.4px;letter-spacing:0.436px;color:#bbbbbb;">DataGenerator</div>
<svg class="a" style="left:86px;top:972px" width="16" height="16" viewBox="0 0 16 16"><rect x="0" y="0" width="16" height="16" rx="3.200" fill="#e03b7e"/><path d="M12.47 5.98A4.6 4.75 0 1 0 12.47 11.42" fill="none" stroke="#fff" stroke-width="1.900"/></svg>
<svg class="a" style="left:104px;top:972px" width="16" height="16" viewBox="0 0 16 16"><circle cx="8" cy="8" r="6.550" fill="#4dd106" stroke="#141617" stroke-width="1"/><path d="M4.800 8.600l2 1.900 4.300-4.400" stroke="#102a00" stroke-width="1.100" fill="none"/></svg>
<div class="a t" style="left:124.5px;top:970.60px;height:21px;line-height:21px;font-size:13.4px;letter-spacing:0.163px;color:#bbbbbb;">DataPackOutput</div>
<svg class="a" style="left:86px;top:993px" width="16" height="16" viewBox="0 0 16 16"><rect x="0" y="0" width="16" height="16" rx="3.200" fill="#9c27b0"/><path d="M4.300 2.600h8v1.600H9.300v8.400h3v1.600h-8v-1.600h3V4.200h-3z" fill="#fff"/></svg>
<svg class="a" style="left:104px;top:993px" width="16" height="16" viewBox="0 0 16 16"><circle cx="8" cy="8" r="6.550" fill="#fdc900" stroke="#141617" stroke-width="1"/><circle cx="8" cy="8" r="1.2" fill="#111"/></svg>
<div class="a t" style="left:124.5px;top:991.60px;height:21px;line-height:21px;font-size:13.4px;letter-spacing:0.341px;color:#bbbbbb;">DataProvider</div>
</div></div>
<div class="a " style="left:319px;top:382px;width:10px;height:624px;background:#3f4245;"></div>
<div class="a " style="left:319px;top:382px;width:10px;height:12px;background:#3c3f41;"></div>
<div class="a " style="left:319px;top:994px;width:10px;height:12px;background:#3c3f41;"></div>
<svg class="a" style="left:316px;top:380.5px" width="16" height="16" viewBox="-8 -8 16 16"><path d="M-3.00 1.65L0 -1.65L3.00 1.65" fill="none" stroke="#b8b9ba" stroke-width="1.1"/></svg>
<svg class="a" style="left:316px;top:991.5px" width="16" height="16" viewBox="-8 -8 16 16"><path d="M-3.00 -1.65L0 1.65L3.00 -1.65" fill="none" stroke="#b8b9ba" stroke-width="1.1"/></svg>
<div class="a" style="left:321px;top:459px;width:6px;height:227px;background:#585c5f;border-radius:3px;"></div>
<div class="a " style="left:31px;top:1006px;width:288px;height:10px;background:#3f4245;"></div>
<div class="a " style="left:31px;top:1006px;width:12px;height:10px;background:#3c3f41;"></div>
<div class="a " style="left:307px;top:1006px;width:12px;height:10px;background:#3c3f41;"></div>
<svg class="a" style="left:29.5px;top:1003px" width="16" height="16" viewBox="-8 -8 16 16"><path d="M1.65 -3.00L-1.65 0L1.65 3.00" fill="none" stroke="#b8b9ba" stroke-width="1.1"/></svg>
<svg class="a" style="left:304.5px;top:1003px" width="16" height="16" viewBox="-8 -8 16 16"><path d="M-1.65 -3.00L1.65 0L-1.65 3.00" fill="none" stroke="#b8b9ba" stroke-width="1.1"/></svg>
<div class="a" style="left:45px;top:1008px;width:196px;height:6px;background:#585c5f;border-radius:3px;"></div>
<div class="a " style="left:319px;top:1006px;width:10px;height:10px;background:#3c3f41;"></div>
<div class="a" style="left:331px;top:530.0px;width:3px;height:3px;border-radius:50%;background:#c4c4c4;"></div>
<div class="a" style="left:2252px;top:530.0px;width:3px;height:3px;border-radius:50%;background:#c4c4c4;"></div>
<div class="a" style="left:331px;top:535.0px;width:3px;height:3px;border-radius:50%;background:#c4c4c4;"></div>
<div class="a" style="left:2252px;top:535.0px;width:3px;height:3px;border-radius:50%;background:#c4c4c4;"></div>
<div class="a" style="left:331px;top:540.0px;width:3px;height:3px;border-radius:50%;background:#c4c4c4;"></div>
<div class="a" style="left:2252px;top:540.0px;width:3px;height:3px;border-radius:50%;background:#c4c4c4;"></div>
<div class="a" style="left:337px;top:64px;width:1912px;height:139px;box-sizing:border-box;border:1px solid #56595b;"></div>
<div class="a " style="left:341px;top:63px;width:92px;height:3px;background:#3c3f41;"></div>
<div class="a t" style="left:343px;top:55.80px;height:20px;line-height:20px;font-size:13.4px;letter-spacing:0.682px;color:#8c8c8c;">Identifier Info</div>
<div class="a t" style="left:349px;top:213.90px;height:20px;line-height:20px;font-size:13.4px;letter-spacing:0.397px;color:#bbbbbb;">AdvancementTabGenerator</div>
<div class="a t" style="left:577.4px;top:213.90px;height:20px;line-height:20px;font-size:13.4px;letter-spacing:0.311px;color:#bbbbbb;">EndAdvancementTabGenerator</div>
<div class="a " style="left:776px;top:211px;width:24px;height:24px;background:#4c4f51;"></div>
<svg class="a" style="left:780px;top:215px" width="16" height="16" viewBox="0 0 16 16"><path d="M4.200 4.200l7.600 7.600M11.800 4.200l-7.600 7.600" stroke="#c4c4c4" stroke-width="1.100" fill="none"/></svg>
<div class="a " style="left:335px;top:241px;width:1916px;height:1px;background:#5d6062;"></div>
<div class="a " style="left:563px;top:239px;width:251px;height:3px;background:#4872a4;"></div>
<div class="a" style="left:335px;top:242px;width:1916px;height:775px;box-sizing:border-box;background:#282a36;border:1px solid #636567;"></div>
<div class="a " style="left:336px;top:243px;width:33px;height:773px;background:#313335;"></div>
<div class="a " style="left:336px;top:470px;width:33px;height:15px;background:#606366;"></div>
<div class="a" style="left:336px;top:243px;width:1904px;height:773px;overflow:hidden;"><div class="a" style="left:-336px;top:-243px;">
<div class="a m" style="left:355px;top:246px;color:#a4a4a3;">1</div>
<div class="a m" style="left:375px;top:246px;"><span class="c">/*</span></div>
<div class="a m" style="left:355px;top:261px;color:#a4a4a3;">2</div>
<div class="a m" style="left:375px;top:261px;"><span class="c"> * Class file decompiled with Vineflower</span></div>
<div class="a m" style="left:355px;top:276px;color:#a4a4a3;">3</div>
<div class="a m" style="left:375px;top:276px;"><span class="c"> */</span></div>
<div class="a m" style="left:355px;top:291px;color:#a4a4a3;">4</div>
<div class="a m" style="left:355px;top:306px;color:#a4a4a3;">5</div>
<div class="a hg" style="left:464px;top:306px;width:185px;height:14px;"></div>
<div class="a hg" style="left:730px;top:306px;width:164px;height:14px;"></div>
<div class="a m" style="left:375px;top:306px;"><span class="k">public</span> <span class="k">class</span> EndAdvancementTabGenerator <span class="k">implements</span> AdvancementTabGenerator {</div>
<div class="a m" style="left:355px;top:321px;color:#a4a4a3;">6</div>
<div class="a m" style="left:375px;top:321px;">    @Override</div>
<div class="a m" style="left:355px;top:336px;color:#a4a4a3;">7</div>
<div class="a hg" style="left:485px;top:336px;width:59px;height:14px;"></div>
<div class="a hg" style="left:548px;top:336px;width:59px;height:14px;"></div>
<div class="a hg" style="left:611px;top:336px;width:59px;height:14px;"></div>
<div class="a hr" style="left:744px;top:336px;width:73px;height:14px;"></div>
<div class="a hg" style="left:828px;top:336px;width:136px;height:14px;"></div>
<div class="a m" style="left:375px;top:336px;">    <span class="k">public</span> <span class="k">void</span> generate(Provider provider, Consumer&lt;C_unoypvme&gt; advancementConsumer) {</div>
<div class="a m" style="left:355px;top:351px;color:#a4a4a3;">8</div>
<div class="a hr" style="left:429px;top:351px;width:73px;height:14px;"></div>
<div class="a hg" style="left:541px;top:351px;width:31px;height:14px;"></div>
<div class="a hg" style="left:576px;top:351px;width:45px;height:14px;"></div>
<div class="a m" style="left:375px;top:351px;">        C_unoypvme lv = Task.create()</div>
<div class="a m" style="left:355px;top:366px;color:#a4a4a3;">9</div>
<div class="a hg" style="left:464px;top:366px;width:52px;height:14px;"></div>
<div class="a m" style="left:375px;top:366px;">            .display(</div>
<div class="a m" style="left:348px;top:381px;color:#a4a4a3;">10</div>
<div class="a hg" style="left:485px;top:381px;width:45px;height:14px;"></div>
<div class="a hr" style="left:534px;top:381px;width:73px;height:14px;"></div>
<div class="a m" style="left:375px;top:381px;">                Blocks.f_nnuqqypu,</div>
<div class="a m" style="left:348px;top:396px;color:#a4a4a3;">11</div>
<div class="a hg" style="left:485px;top:396px;width:31px;height:14px;"></div>
<div class="a hg" style="left:520px;top:396px;width:87px;height:14px;"></div>
<div class="a m" style="left:375px;top:396px;">                Text.translatable(<span class="s">&quot;advancements.end.root.title&quot;</span>),</div>
<div class="a m" style="left:348px;top:411px;color:#a4a4a3;">12</div>
<div class="a hg" style="left:485px;top:411px;width:31px;height:14px;"></div>
<div class="a hg" style="left:520px;top:411px;width:87px;height:14px;"></div>
<div class="a m" style="left:375px;top:411px;">                Text.translatable(<span class="s">&quot;advancements.end.root.description&quot;</span>),</div>
<div class="a m" style="left:348px;top:426px;color:#a4a4a3;">13</div>
<div class="a hg" style="left:513px;top:426px;width:73px;height:14px;"></div>
<div class="a m" style="left:375px;top:426px;">                <span class="k">new</span> Identifier(<span class="s">&quot;textures/gui/advancements/backgrounds/end.png&quot;</span>),</div>
<div class="a m" style="left:348px;top:441px;color:#a4a4a3;">14</div>
<div class="a hg" style="left:485px;top:441px;width:115px;height:14px;"></div>
<div class="a hp" style="left:604px;top:441px;width:31px;height:14px;"></div>
<div class="a m" style="left:375px;top:441px;">                AdvancementFrame.TASK,</div>
<div class="a m" style="left:348px;top:456px;color:#a4a4a3;">15</div>
<div class="a m" style="left:375px;top:456px;">                <span class="k">false</span>,</div>
<div class="a m" style="left:348px;top:471px;color:#a4a4a3;">16</div>
<div class="a m" style="left:375px;top:471px;">                <span class="k">false</span>,</div>
<div class="a m" style="left:348px;top:486px;color:#a4a4a3;">17</div>
<div class="a m" style="left:375px;top:486px;">                <span class="k">false</span></div>
<div class="a m" style="left:348px;top:501px;color:#a4a4a3;">18</div>
<div class="a m" style="left:375px;top:501px;">            )</div>
<div class="a m" style="left:348px;top:516px;color:#a4a4a3;">19</div>
<div class="a hr" style="left:464px;top:516px;width:73px;height:14px;"></div>
<div class="a hg" style="left:646px;top:516px;width:73px;height:14px;"></div>
<div class="a hg" style="left:723px;top:516px;width:17px;height:14px;"></div>
<div class="a hg" style="left:744px;top:516px;width:38px;height:14px;"></div>
<div class="a hg" style="left:786px;top:516px;width:24px;height:14px;"></div>
<div class="a m" style="left:375px;top:516px;">            .m_liavgrzl(<span class="s">&quot;entered_end&quot;</span>, Conditions.to(World.END))</div>
<div class="a m" style="left:348px;top:531px;color:#a4a4a3;">20</div>
<div class="a hg" style="left:464px;top:531px;width:38px;height:14px;"></div>
<div class="a hg" style="left:506px;top:531px;width:136px;height:14px;"></div>
<div class="a m" style="left:375px;top:531px;">            .build(advancementConsumer, <span class="s">&quot;end/root&quot;</span>);</div>
<div class="a m" style="left:348px;top:546px;color:#a4a4a3;">21</div>
<div class="a hr" style="left:429px;top:546px;width:73px;height:14px;"></div>
<div class="a hg" style="left:548px;top:546px;width:31px;height:14px;"></div>
<div class="a hg" style="left:583px;top:546px;width:45px;height:14px;"></div>
<div class="a m" style="left:375px;top:546px;">        C_unoypvme lv2 = Task.create()</div>
<div class="a m" style="left:348px;top:561px;color:#a4a4a3;">22</div>
<div class="a hr" style="left:464px;top:561px;width:73px;height:14px;"></div>
<div class="a m" style="left:375px;top:561px;">            .m_ofouvzjr(lv)</div>
<div class="a m" style="left:348px;top:576px;color:#a4a4a3;">23</div>
<div class="a hg" style="left:464px;top:576px;width:52px;height:14px;"></div>
<div class="a m" style="left:375px;top:576px;">            .display(</div>
<div class="a m" style="left:348px;top:591px;color:#a4a4a3;">24</div>
<div class="a hg" style="left:485px;top:591px;width:45px;height:14px;"></div>
<div class="a hr" style="left:534px;top:591px;width:73px;height:14px;"></div>
<div class="a m" style="left:375px;top:591px;">                Blocks.f_kusrubar,</div>
<div class="a m" style="left:348px;top:606px;color:#a4a4a3;">25</div>
<div class="a hg" style="left:485px;top:606px;width:31px;height:14px;"></div>
<div class="a hg" style="left:520px;top:606px;width:87px;height:14px;"></div>
<div class="a m" style="left:375px;top:606px;">                Text.translatable(<span class="s">&quot;advancements.end.kill_dragon.title&quot;</span>),</div>
<div class="a m" style="left:348px;top:621px;color:#a4a4a3;">26</div>
<div class="a hg" style="left:485px;top:621px;width:31px;height:14px;"></div>
<div class="a hg" style="left:520px;top:621px;width:87px;height:14px;"></div>
<div class="a m" style="left:375px;top:621px;">                Text.translatable(<span class="s">&quot;advancements.end.kill_dragon.description&quot;</span>),</div>
<div class="a m" style="left:348px;top:636px;color:#a4a4a3;">27</div>
<div class="a m" style="left:375px;top:636px;">                <span class="k">null</span>,</div>
<div class="a m" style="left:348px;top:651px;color:#a4a4a3;">28</div>
<div class="a hg" style="left:485px;top:651px;width:115px;height:14px;"></div>
<div class="a hp" style="left:604px;top:651px;width:31px;height:14px;"></div>
<div class="a m" style="left:375px;top:651px;">                AdvancementFrame.TASK,</div>
<div class="a m" style="left:348px;top:666px;color:#a4a4a3;">29</div>
<div class="a m" style="left:375px;top:666px;">                <span class="k">true</span>,</div>
<div class="a m" style="left:348px;top:681px;color:#a4a4a3;">30</div>
<div class="a m" style="left:375px;top:681px;">                <span class="k">true</span>,</div>
<div class="a m" style="left:348px;top:696px;color:#a4a4a3;">31</div>
<div class="a m" style="left:375px;top:696px;">                <span class="k">false</span></div>
<div class="a m" style="left:348px;top:711px;color:#a4a4a3;">32</div>
<div class="a m" style="left:375px;top:711px;">            )</div>
<div class="a m" style="left:348px;top:726px;color:#a4a4a3;">33</div>
<div class="a hr" style="left:464px;top:726px;width:73px;height:14px;"></div>
<div class="a hg" style="left:660px;top:726px;width:73px;height:14px;"></div>
<div class="a hr" style="left:737px;top:726px;width:73px;height:14px;"></div>
<div class="a hg" style="left:814px;top:726px;width:52px;height:14px;"></div>
<div class="a hg" style="left:870px;top:726px;width:45px;height:14px;"></div>
<div class="a hg" style="left:933px;top:726px;width:31px;height:14px;"></div>
<div class="a hg" style="left:968px;top:726px;width:73px;height:14px;"></div>
<div class="a hr" style="left:1045px;top:726px;width:73px;height:14px;"></div>
<div class="a m" style="left:375px;top:726px;">            .m_liavgrzl(<span class="s">&quot;killed_dragon&quot;</span>, Conditions.m_kegmmdjd(Builder.create().type(EntityType.f_heitqesf)))</div>
<div class="a m" style="left:348px;top:741px;color:#a4a4a3;">34</div>
<div class="a hg" style="left:464px;top:741px;width:38px;height:14px;"></div>
<div class="a hg" style="left:506px;top:741px;width:136px;height:14px;"></div>
<div class="a m" style="left:375px;top:741px;">            .build(advancementConsumer, <span class="s">&quot;end/kill_dragon&quot;</span>);</div>
<div class="a m" style="left:348px;top:756px;color:#a4a4a3;">35</div>
<div class="a hr" style="left:429px;top:756px;width:73px;height:14px;"></div>
<div class="a hg" style="left:548px;top:756px;width:31px;height:14px;"></div>
<div class="a hg" style="left:583px;top:756px;width:45px;height:14px;"></div>
<div class="a m" style="left:375px;top:756px;">        C_unoypvme lv3 = Task.create()</div>
<div class="a m" style="left:348px;top:771px;color:#a4a4a3;">36</div>
<div class="a hr" style="left:464px;top:771px;width:73px;height:14px;"></div>
<div class="a m" style="left:375px;top:771px;">            .m_ofouvzjr(lv2)</div>
<div class="a m" style="left:348px;top:786px;color:#a4a4a3;">37</div>
<div class="a hg" style="left:464px;top:786px;width:52px;height:14px;"></div>
<div class="a m" style="left:375px;top:786px;">            .display(</div>
<div class="a m" style="left:348px;top:801px;color:#a4a4a3;">38</div>
<div class="a hg" style="left:485px;top:801px;width:38px;height:14px;"></div>
<div class="a hr" style="left:527px;top:801px;width:73px;height:14px;"></div>
<div class="a m" style="left:375px;top:801px;">                Items.f_uqlttxys,</div>
<div class="a m" style="left:348px;top:816px;color:#a4a4a3;">39</div>
<div class="a hg" style="left:485px;top:816px;width:31px;height:14px;"></div>
<div class="a hg" style="left:520px;top:816px;width:87px;height:14px;"></div>
<div class="a m" style="left:375px;top:816px;">                Text.translatable(<span class="s">&quot;advancements.end.enter_end_gateway.title&quot;</span>),</div>
<div class="a m" style="left:348px;top:831px;color:#a4a4a3;">40</div>
<div class="a hg" style="left:485px;top:831px;width:31px;height:14px;"></div>
<div class="a hg" style="left:520px;top:831px;width:87px;height:14px;"></div>
<div class="a m" style="left:375px;top:831px;">                Text.translatable(<span class="s">&quot;advancements.end.enter_end_gateway.description&quot;</span>),</div>
<div class="a m" style="left:348px;top:846px;color:#a4a4a3;">41</div>
<div class="a m" style="left:375px;top:846px;">                <span class="k">null</span>,</div>
<div class="a m" style="left:348px;top:861px;color:#a4a4a3;">42</div>
<div class="a hg" style="left:485px;top:861px;width:115px;height:14px;"></div>
<div class="a hp" style="left:604px;top:861px;width:31px;height:14px;"></div>
<div class="a m" style="left:375px;top:861px;">                AdvancementFrame.TASK,</div>
<div class="a m" style="left:348px;top:876px;color:#a4a4a3;">43</div>
<div class="a m" style="left:375px;top:876px;">                <span class="k">true</span>,</div>
<div class="a m" style="left:348px;top:891px;color:#a4a4a3;">44</div>
<div class="a m" style="left:375px;top:891px;">                <span class="k">true</span>,</div>
<div class="a m" style="left:348px;top:906px;color:#a4a4a3;">45</div>
<div class="a m" style="left:375px;top:906px;">                <span class="k">false</span></div>
<div class="a m" style="left:348px;top:921px;color:#a4a4a3;">46</div>
<div class="a m" style="left:375px;top:921px;">            )</div>
<div class="a m" style="left:348px;top:936px;color:#a4a4a3;">47</div>
<div class="a hr" style="left:464px;top:936px;width:73px;height:14px;"></div>
<div class="a hg" style="left:702px;top:936px;width:73px;height:14px;"></div>
<div class="a hg" style="left:779px;top:936px;width:38px;height:14px;"></div>
<div class="a hg" style="left:821px;top:936px;width:45px;height:14px;"></div>
<div class="a hr" style="left:870px;top:936px;width:73px;height:14px;"></div>
<div class="a m" style="left:375px;top:936px;">            .m_liavgrzl(<span class="s">&quot;entered_end_gateway&quot;</span>, Conditions.block(Blocks.f_mugjfljn))</div>
<div class="a m" style="left:348px;top:951px;color:#a4a4a3;">48</div>
<div class="a hg" style="left:464px;top:951px;width:38px;height:14px;"></div>
<div class="a hg" style="left:506px;top:951px;width:136px;height:14px;"></div>
<div class="a m" style="left:375px;top:951px;">            .build(advancementConsumer, <span class="s">&quot;end/enter_end_gateway&quot;</span>);</div>
<div class="a m" style="left:348px;top:966px;color:#a4a4a3;">49</div>
<div class="a hg" style="left:429px;top:966px;width:31px;height:14px;"></div>
<div class="a hg" style="left:464px;top:966px;width:45px;height:14px;"></div>
<div class="a m" style="left:375px;top:966px;">        Task.create()</div>
<div class="a m" style="left:348px;top:981px;color:#a4a4a3;">50</div>
<div class="a hr" style="left:464px;top:981px;width:73px;height:14px;"></div>
<div class="a m" style="left:375px;top:981px;">            .m_ofouvzjr(lv2)</div>
<div class="a m" style="left:348px;top:996px;color:#a4a4a3;">51</div>
<div class="a hg" style="left:464px;top:996px;width:52px;height:14px;"></div>
<div class="a m" style="left:375px;top:996px;">            .display(</div>
<div class="a m" style="left:348px;top:1011px;color:#a4a4a3;">52</div>
<div class="a hg" style="left:485px;top:1011px;width:38px;height:14px;"></div>
<div class="a hr" style="left:527px;top:1011px;width:73px;height:14px;"></div>
<div class="a m" style="left:375px;top:1011px;">                Items.f_sthigvia,</div>
<div class="a " style="left:529px;top:470px;width:1px;height:15px;background:#f8f8f2;"></div>
</div></div>
<div class="a " style="left:2240px;top:243px;width:10px;height:773px;background:#3f4245;"></div>
<div class="a " style="left:2240px;top:243px;width:10px;height:12px;background:#3c3f41;"></div>
<div class="a " style="left:2240px;top:1004px;width:10px;height:12px;background:#3c3f41;"></div>
<svg class="a" style="left:2237px;top:241.5px" width="16" height="16" viewBox="-8 -8 16 16"><path d="M-3.00 1.65L0 -1.65L3.00 1.65" fill="none" stroke="#b8b9ba" stroke-width="1.1"/></svg>
<svg class="a" style="left:2237px;top:1001.5px" width="16" height="16" viewBox="-8 -8 16 16"><path d="M-3.00 -1.65L0 1.65L3.00 -1.65" fill="none" stroke="#b8b9ba" stroke-width="1.1"/></svg>
<div class="a" style="left:2242px;top:257px;width:6px;height:279px;background:#585c5f;border-radius:3px;"></div>
<div class="a t" style="left:2256.3px;top:56.80px;height:20px;line-height:20px;font-size:13.4px;letter-spacing:0.395px;color:#bbbbbb;">Inheritance</div>
<div class="a" style="left:2486.5px;top:55.25px;width:21.5px;height:20.25px;box-sizing:border-box;background:#4e5052;border:1px solid #5e6062;border-radius:4px;"></div>
<div class="a" style="left:2491.75px;top:61.375px;width:11px;height:11px;box-sizing:border-box;border:1px solid #c2c2c2;"></div>
<div class="a" style="left:2509.5px;top:55.25px;width:20.5px;height:20.25px;box-sizing:border-box;background:#4e5052;border:1px solid #5e6062;border-radius:4px;"></div>
<div class="a" style="left:2517.25px;top:66.875px;width:4px;height:1px;background:#c2c2c2;"></div>
<div class="a" style="left:2256px;top:77px;width:274px;height:562px;box-sizing:border-box;background:#46494b;border:1px solid #616365;"></div>
<div class="a" style="left:2257px;top:78px;width:272px;height:550px;overflow:hidden;"><div class="a" style="left:-2257px;top:-78px;">
<svg class="a" style="left:2257.6px;top:80.5px" width="16" height="16" viewBox="-8 -8 16 16"><path d="M-4.10 -2.20L0 2.20L4.10 -2.20" fill="none" stroke="#9a9d9f" stroke-width="1.1"/></svg>
<svg class="a" style="left:2278px;top:80px" width="16" height="16" viewBox="0 0 16 16"><rect x="0" y="0" width="16" height="16" rx="3.200" fill="#9c27b0"/><path d="M4.300 2.600h8v1.600H9.300v8.400h3v1.600h-8v-1.600h3V4.200h-3z" fill="#fff"/></svg>
<div class="a t" style="left:2298.5px;top:78.60px;height:20px;line-height:20px;font-size:13.4px;letter-spacing:0.295px;color:#bbbbbb;">net/minecraft/advancement/criterion/Criterion</div>
<svg class="a" style="left:2275.5px;top:100px" width="16" height="16" viewBox="-8 -8 16 16"><path d="M-2.20 -4.10L2.20 0L-2.20 4.10" fill="none" stroke="#9a9d9f" stroke-width="1.1"/></svg>
<svg class="a" style="left:2296px;top:100px" width="16" height="16" viewBox="0 0 16 16"><rect x="0" y="0" width="16" height="16" rx="3.200" fill="#9c27b0"/><path d="M4.300 2.600h8v1.600H9.300v8.400h3v1.600h-8v-1.600h3V4.200h-3z" fill="#fff"/></svg>
<div class="a t" style="left:2316.5px;top:98.60px;height:20px;line-height:20px;font-size:13.4px;letter-spacing:0.295px;color:#bbbbbb;">net/minecraft/advancement/criterion/CriterionTrigger</div>
<svg class="a" style="left:2296px;top:120px" width="16" height="16" viewBox="0 0 16 16"><rect x="0" y="0" width="16" height="16" rx="3.200" fill="#e03b7e"/><path d="M12.47 5.98A4.6 4.75 0 1 0 12.47 11.42" fill="none" stroke="#fff" stroke-width="1.900"/></svg>
<div class="a t" style="left:2316.5px;top:118.60px;height:20px;line-height:20px;font-size:13.4px;letter-spacing:0.299px;color:#bbbbbb;">net/minecraft/advancement/criterion/CriterionConditions</div>
</div></div>
<div class="a " style="left:2257px;top:628px;width:272px;height:10px;background:#3f4245;"></div>
<div class="a " style="left:2257px;top:628px;width:12px;height:10px;background:#3c3f41;"></div>
<div class="a " style="left:2517px;top:628px;width:12px;height:10px;background:#3c3f41;"></div>
<svg class="a" style="left:2255.5px;top:625px" width="16" height="16" viewBox="-8 -8 16 16"><path d="M1.65 -3.00L-1.65 0L1.65 3.00" fill="none" stroke="#b8b9ba" stroke-width="1.1"/></svg>
<svg class="a" style="left:2514.5px;top:625px" width="16" height="16" viewBox="-8 -8 16 16"><path d="M-1.65 -3.00L1.65 0L-1.65 3.00" fill="none" stroke="#b8b9ba" stroke-width="1.1"/></svg>
<div class="a" style="left:2271px;top:630px;width:135px;height:6px;background:#585c5f;border-radius:3px;"></div>
<div class="a" style="left:2386.8px;top:640px;width:3px;height:3px;border-radius:50%;background:#c4c4c4;"></div>
<div class="a" style="left:2392.0px;top:640px;width:3px;height:3px;border-radius:50%;background:#c4c4c4;"></div>
<div class="a" style="left:2397.2px;top:640px;width:3px;height:3px;border-radius:50%;background:#c4c4c4;"></div>
<div class="a t" style="left:2256.5px;top:646.10px;height:20px;line-height:20px;font-size:13.4px;letter-spacing:-0.331px;color:#bbbbbb;">Collab</div>
<div class="a" style="left:2486.5px;top:644.5px;width:21.5px;height:20.5px;box-sizing:border-box;background:#4e5052;border:1px solid #5e6062;border-radius:4px;"></div>
<div class="a" style="left:2491.75px;top:650.75px;width:11px;height:11px;box-sizing:border-box;border:1px solid #c2c2c2;"></div>
<div class="a" style="left:2496.75px;top:650.75px;width:1px;height:11px;background:#c2c2c2;"></div>
<div class="a" style="left:2509.5px;top:644.5px;width:20.5px;height:20.5px;box-sizing:border-box;background:#4e5052;border:1px solid #5e6062;border-radius:4px;"></div>
<div class="a" style="left:2517.25px;top:656.25px;width:4px;height:1px;background:#c2c2c2;"></div>
<div class="a t" style="left:2256.5px;top:665.90px;height:20px;line-height:20px;font-size:13.4px;letter-spacing:0.255px;color:#bbbbbb;">Enigma is currently running offline.</div>
<div class="a" style="left:2256px;top:684.5px;width:274px;height:24px;box-sizing:border-box;background:#4e5052;border:1px solid #5e6062;border-radius:4px;"></div>
<div class="a t" style="left:2356px;top:687.80px;height:20px;line-height:20px;font-size:13.4px;letter-spacing:0.209px;color:#bbbbbb;">Start Server</div>
<div class="a" style="left:2256px;top:709.5px;width:274px;height:24px;box-sizing:border-box;background:#4e5052;border:1px solid #5e6062;border-radius:4px;"></div>
<div class="a t" style="left:2337.3px;top:712.80px;height:20px;line-height:20px;font-size:13.4px;letter-spacing:0.177px;color:#bbbbbb;">Connect to Server</div>
<div class="a t" style="left:2472.2px;top:1017.80px;height:20px;line-height:20px;font-size:13.4px;letter-spacing:0.137px;color:#bbbbbb;">Disconnected.</div>
<div class="a " style="left:0px;top:1036px;width:2560px;height:44px;background:#2a2e32;"></div>
<div class="a " style="left:0px;top:1036px;width:20px;height:44px;background:#000000;"></div>
<div class="a" style="left:20px;top:1036px;width:8px;height:8px;background:#000;"></div><div class="a" style="left:20px;top:1036px;width:16px;height:16px;background:#2a2e32;border-top-left-radius:6px;"></div>
<div class="a " style="left:2539px;top:1036px;width:21px;height:44px;background:#1b1c1e;"></div>
<div class="a " style="left:118px;top:1036px;width:52px;height:44px;background:#3a3e41;"></div>
<div class="a " style="left:170px;top:1036px;width:50px;height:44px;background:#45494d;"></div>
<div class="a " style="left:170px;top:1036px;width:50px;height:3px;background:#6b6f73;"></div>
<div class="a " style="left:222px;top:1036px;width:50px;height:44px;background:#45494d;"></div>
<div class="a " style="left:222px;top:1036px;width:50px;height:3px;background:#6b6f73;"></div>
<div class="a " style="left:274px;top:1036px;width:50px;height:44px;background:#45494d;"></div>
<div class="a " style="left:274px;top:1036px;width:50px;height:3px;background:#6b6f73;"></div>
<div class="a " style="left:326px;top:1036px;width:50px;height:44px;background:#45494d;"></div>
<div class="a " style="left:326px;top:1036px;width:50px;height:3px;background:#6b6f73;"></div>
<div class="a " style="left:378px;top:1036px;width:50px;height:44px;background:#32637e;"></div>
<div class="a " style="left:378px;top:1036px;width:50px;height:3px;background:#3daee9;"></div>
<div class="a " style="left:430px;top:1036px;width:50px;height:44px;background:#45494d;"></div>
<div class="a " style="left:430px;top:1036px;width:50px;height:3px;background:#6b6f73;"></div>
<svg class="a" style="left:26px;top:1042px" width="34" height="34" viewBox="0 0 34 34" fill="#fcfcfc">
<circle cx="10.800" cy="5.700" r="1.800"/><circle cx="7.300" cy="15.500" r="2.600"/><circle cx="14" cy="25" r="3.200"/>
<path d="M19.500 8.500l2.800-2.800 7.400 7.400-7.400 7.400-2.800-2.800 4.600-4.600z"/></svg>
<svg class="a" style="left:76px;top:1043px" width="30" height="30" viewBox="0 0 30 30">
<defs><linearGradient id="sg" x1="0" y1="0" x2="1" y2="1"><stop offset="0" stop-color="#4a4d50"/><stop offset=".5" stop-color="#26282a"/><stop offset="1" stop-color="#3a3c3e"/></linearGradient></defs>
<rect x="1" y="1" width="28" height="27" fill="url(#sg)"/><rect x="1" y="1" width="28" height="1" fill="#6a6d70"/>
<rect x="4" y="10" width="22" height="2" fill="#55585b"/><rect x="4" y="10" width="17" height="2" fill="#3daee9"/><circle cx="21" cy="11" r="2" fill="#fcfcfc"/>
<rect x="4" y="18" width="22" height="2" fill="#55585b"/><rect x="4" y="18" width="7" height="2" fill="#3daee9"/><circle cx="11" cy="19" r="2" fill="#fcfcfc"/></svg>
<svg class="a" style="left:127px;top:1043px" width="32" height="30" viewBox="0 0 32 30">
<path d="M1 1h12l2 2h16v26H1z" fill="#2f7db0"/><rect x="2" y="6" width="28" height="6" fill="#f7f6ef"/>
<path d="M1 11h10l2-2h18v20H1z" fill="#46a2da"/><path d="M1 11l30 18H1z" fill="#52abe0" opacity=".6"/></svg>
<svg class="a" style="left:177px;top:1041px" width="42" height="36" viewBox="0 0 42 36">
<defs><linearGradient id="ff" x1=".85" y1=".1" x2=".25" y2=".95"><stop offset="0" stop-color="#ffd83a"/><stop offset=".3" stop-color="#ff9a24"/><stop offset=".62" stop-color="#ff4b33"/><stop offset="1" stop-color="#f0257e"/></linearGradient></defs>
<path d="M22.500 1c1.500 2.500 4 3.500 6.500 6.500 2 2.500 3.500 6 3.500 11 0 8.500-6.500 15-14.500 15S3.500 27.500 3.500 19.500c0-4.500 1.500-8.500 4-11.500.200 1.500.700 2.500 1.500 3.500.500-2 1.500-3.500 2.800-4.500.200 1.500.800 2.500 1.700 3.200C15 6.500 18.500 4.500 22.500 1z" fill="url(#ff)"/>
<path d="M16 9c1-3.500 3.500-6 6.500-8 1.500 2.500 4 3.500 6.500 6.500 2 2.500 3.200 5.500 3.500 9.500-2-4-5.500-6.500-9.500-7-2.500-.400-5-.300-7-1z" fill="#ffdd3f"/>
<circle cx="18" cy="17.500" r="6.200" fill="#8a3df2"/><path d="M12.300 20c1 3 4 4.500 7 4 2.500-.500 4.500-2.500 5-5-1.500 2.500-4.500 3.500-7 3-2-.400-3.500-1-5-2z" fill="#5b46e0"/>
<path d="M9.500 13.500c1.500-1.500 3-2 4.500-1.800 1.500-2 4.500-2.500 7-1.200 1.500.800 2.500 2 3 3.500-1.500-1.200-3-1.500-4.500-1-1 .300-1.500 1.200-1.300 2.200-1.500-.500-3 0-3.700 1.300-1.500-.300-3.500-1.300-5-3z" fill="#ff9326"/>
<path d="M26.200 5h2.800l4.800-4v13l-4.800-4h-2.800z" fill="#f4f4f4"/><path d="M35 4.800a2.500 2.500 0 0 1 0 4.400M35.600 1.800a5.700 5.700 0 0 1 0 10.400" fill="none" stroke="#f4f4f4" stroke-width="1"/></svg>
<svg class="a" style="left:232px;top:1043px" width="30" height="30" viewBox="0 0 30 30">
<defs><linearGradient id="tg" x1="0" y1="0" x2="1" y2="1"><stop offset="0" stop-color="#434548"/><stop offset="1" stop-color="#292a2c"/></linearGradient></defs>
<rect x="1" y="1" width="28" height="28" fill="url(#tg)"/><rect x="1" y="1" width="28" height="1" fill="#85888b"/><rect x="1" y="28" width="28" height="1" fill="#1f2021"/>
<path d="M12 8.700l6.600 6.300-6.600 6.700" fill="none" stroke="#9da0a2" stroke-width="1.200"/></svg>
<svg class="a" style="left:283px;top:1042px" width="34" height="38" viewBox="0 0 34 38">
<path d="M1.500 12.600L4.800 1.300l7.300 1.300 6.700 4v.7H7.200v6.600z" fill="#fc3d7c"/>
<path d="M18.800 6.600L22.100 2l8.600 7.300-.6 16.600-12 5.300-4-4.700 10.700-1.600V7.300z" fill="#2b7cf2"/><path d="M22.100 2l8.600 7.300-5.900 1V7.300l-6-.7z" fill="#4a6be0"/>
<path d="M2.200 18.600l2-4.700h3v8l-2.400-.7z" fill="#f98f2a"/>
<path d="M4.800 21.200l2.400.7v3h6.900v1.600L4.500 30.200z" fill="#c4418f"/>
<rect x="7.200" y="7.300" width="17.600" height="17.600" fill="#0b0b0b"/><rect x="9" y="21.300" width="6" height="1.700" fill="#b4b4b4"/>
<text x="8.600" y="17.300" font-family="Liberation Serif" font-weight="bold" font-size="9.500" letter-spacing=".4" fill="#fff">IJ</text>
<circle cx="15.500" cy="32.800" r="4.300" fill="#27ae60"/><circle cx="15.500" cy="32.800" r="4.300" fill="none" stroke="#2f3540" stroke-width=".5"/><path d="M12.900 32.800h5.200M15.500 30.200v5.200" stroke="#fff" stroke-width="1.300"/></svg>
<svg class="a" style="left:336px;top:1043px" width="30" height="32" viewBox="0 0 30 32">
<path d="M1.900 7.900L14.900 0v8.300L8.900 12.300z" fill="#8fd460"/>
<path d="M14.900 0l6.300 4-2.700 5.600-3.600-1.300z" fill="#e8579a"/>
<path d="M21.200 4l7 3.900-5 3-4.700-1.300z" fill="#f4a060"/>
<path d="M28.200 7.900v7h-6.400l1.400-4z" fill="#f8d46c"/>
<path d="M28.200 14.900v6.700l-6.400-2v-4.700z" fill="#80b896"/>
<path d="M28.200 21.600l-7 4.300-2.700-4.300 3.300-2z" fill="#3f7fd2"/>
<path d="M21.200 25.900l-6 3.300v-7l3.300-.6z" fill="#8d399c"/>
<path d="M15.200 29.200L1.900 21.900l7-2.300 6.300 2.600z" fill="#4b3a30"/>
<path d="M1.900 21.900V7.900l7 4.400v7.300z" fill="#7c5542"/>
<path d="M14.900 7.900l6.300 3.700-6.300 3.600-6.300-3.600z" fill="#fdfdfc"/><path d="M8.600 11.600l6.300 3.600v7l-6.300-3.300z" fill="#edebe7"/><path d="M21.200 11.600l-6.300 3.600v7l6.300-3.300z" fill="#e2e0dc"/></svg>
<svg class="a" style="left:388px;top:1041px" width="30" height="40" viewBox="0 0 30 40">
<path d="M14.700 1l13.900 8.300-13.900 7.600L1 9.300z" fill="#97e070"/>
<path d="M1 9.300l13.700 7.600v14.300L1 24.200z" fill="#9a6a44"/><path d="M28.600 9.300l-13.900 7.600v14.300l13.900-7z" fill="#3a2419"/>
<path d="M1 9.300l13.700 7.600v6l-1.800-.8v-2l-2.200-1v3l-2-1v-3.500l-2-1v2l-2.500-1.200v-2.600L1 13.600z" fill="#7ccf4a"/>
<path d="M28.600 9.300l-13.900 7.600v5.500l2.500-1.200v-2.500l2.500-1.300v3l2.500-1.200v-3l2.200-1.100v2l2.200-1.100v-2.200l2-1z" fill="#5aa32f"/>
<path d="M4 17l1.500.7v1.500L4 18.500zM8 22l1.500.7v1.500L8 23.500zM5 25.500l1.200.6v1.200L5 26.700zM10.500 26l1.500.7v1.500l-1.500-.7z" fill="#c08a5a"/>
<path d="M6 6.500l2-1 1.500.8-2 1zM14 8l2-1 1.500.8-2 1zM18 4.500l1.500-.8 1.300.7-1.500.8zM11 11.500l2-1 1.500.8-2 1zM20 10l1.500-.8 1.300.7-1.500.8z" fill="#86d060"/>
<circle cx="14.700" cy="33.800" r="4.300" fill="#27ae60"/><circle cx="14.700" cy="33.800" r="4.300" fill="none" stroke="#2c4a66" stroke-width=".5"/><path d="M12.100 33.800h5.200M14.700 31.200v5.200" stroke="#fff" stroke-width="1.300"/></svg>
<svg class="a" style="left:439.900px;top:1042.900px" width="30" height="30" viewBox="-15 -15 30 30">
<defs><linearGradient id="bg1" x1="0" y1="0" x2="1" y2="1"><stop offset="0" stop-color="#17baff"/><stop offset=".5" stop-color="#1a93ff"/><stop offset="1" stop-color="#1a80f8"/></linearGradient><linearGradient id="bw" x1="0" y1="0" x2="1" y2="1"><stop offset="0" stop-color="#f4f4f2"/><stop offset="1" stop-color="#b9bcc0"/></linearGradient></defs>
<circle cx="0" cy="0" r="13.400" fill="url(#bg1)"/>
<path d="M-9.400-8.300C-5-8.500-2-10.800 2.900-10.600C6-10.500 8-9.800 9.500-8.600C7-7.500 4-6 .5-4.300C-1.500-3.300-3.500-2.300-5.500-1.500C-6.500-3-6-4.600-4-6C-3-6.600-2.500-6.800-2.100-7C-4.500-7-7-7.500-9.400-8.300Z" fill="url(#bw)"/>
<path d="M-7.100-.7C-6-3-3-3.500-.5-2.500C3-1 7 2 10.200 4.600C7 4.300 4.500 3.800 2.500 3C3 5.500 3.800 8 4.500 10.600C2 8.500 .3 6-1 3C-3.500 2.800-6 1.500-7.100-.7Z" fill="url(#bw)"/>
<circle cx="2.600" cy="-8.500" r="1.800" fill="#1d7ff0"/><circle cx="-3.600" cy=".8" r="2.600" fill="#1d7ff0"/></svg>
<svg class="a" style="left:2196px;top:1044px" width="204" height="30" viewBox="0 0 204 30" fill="none" stroke="#fcfcfc" stroke-width="1.250">
<path d="M6.300 18h13.600c-2-1.600-2.700-3.400-2.700-6.200 0-3.600-1.700-5.600-4.100-5.600S9 8.200 9 11.800c0 2.800-.7 4.600-2.700 6.200z" stroke-linejoin="round"/><path d="M11.300 19.700h3.600a1.800 1.800 0 0 1-3.600 0z" fill="#fcfcfc" stroke="none"/>
<path d="M8.400 6.300c-.9 1-1.300 2.100-1.300 3.400M6.700 5C5.500 6.400 5.100 7.900 5.100 9.700M17.800 6.300c.9 1 1.300 2.100 1.300 3.400M19.500 5c1.200 1.400 1.600 2.900 1.600 4.700" stroke-width=".9"/>
<path d="M36.800 8.900h12.800v12.300H36.800z"/><path d="M39.100 5.800h8.200v3.700h-8.200z" fill="#fcfcfc" stroke="none"/><path d="M38.700 12.400h8.200M38.700 15.400h6.200M38.700 18.300h3.300" stroke-width="1.100"/>
<circle cx="72.750" cy="13.600" r="7.700"/><path d="M71 10.800l5.600 2.800-5.600 2.800z" fill="#fcfcfc" stroke="none"/>
<path d="M94.900 10.800h2.100v6.100h-2.100zM97.600 10.800l6.300-5v16.400l-6.300-5z" fill="#fcfcfc" stroke="none"/><path d="M106 10.300a4.200 4.200 0 0 1 0 7" stroke-width="1.100"/><path d="M107.300 6.800a8.600 8.600 0 0 1 0 14" stroke-width="1" stroke-opacity=".4"/>
<path d="M128.500 9.600l9 8.200-4.500 4V6.100l4.500 4-9 8.200" stroke-width="1.150"/>
<path d="M152.700 10.800a14.600 14.600 0 0 1 20.600 0" stroke-width="1" stroke-opacity=".45"/><path d="M155.300 14.300a10.900 10.900 0 0 1 15.400 0"/><path d="M158.600 17.700a6.200 6.200 0 0 1 8.800 0"/><circle cx="163" cy="20.400" r="1.600" stroke-width="1.100"/>
<path d="M184.800 17.300l6.100-6 6.100 6" stroke-width="1.300"/></svg>
<div class="a t" style="left:2412px;top:1042.90px;height:20px;line-height:20px;font-size:17px;letter-spacing:-0.552px;color:#fcfcfc;">9:57 P.M.</div>
<div class="a t" style="left:2411px;top:1057.70px;height:16px;line-height:16px;font-size:14.2px;letter-spacing:-0.564px;color:#fcfcfc;">2023-09-27</div>
<div class="a" style="left:2507px;top:1050px;width:16px;height:16px;box-sizing:border-box;border:1.200px solid #fcfcfc;"></div>
<div class="a" style="left:2509px;top:1062.800px;width:12px;height:1px;background:#fcfcfc;"></div>
</div></body></html>
